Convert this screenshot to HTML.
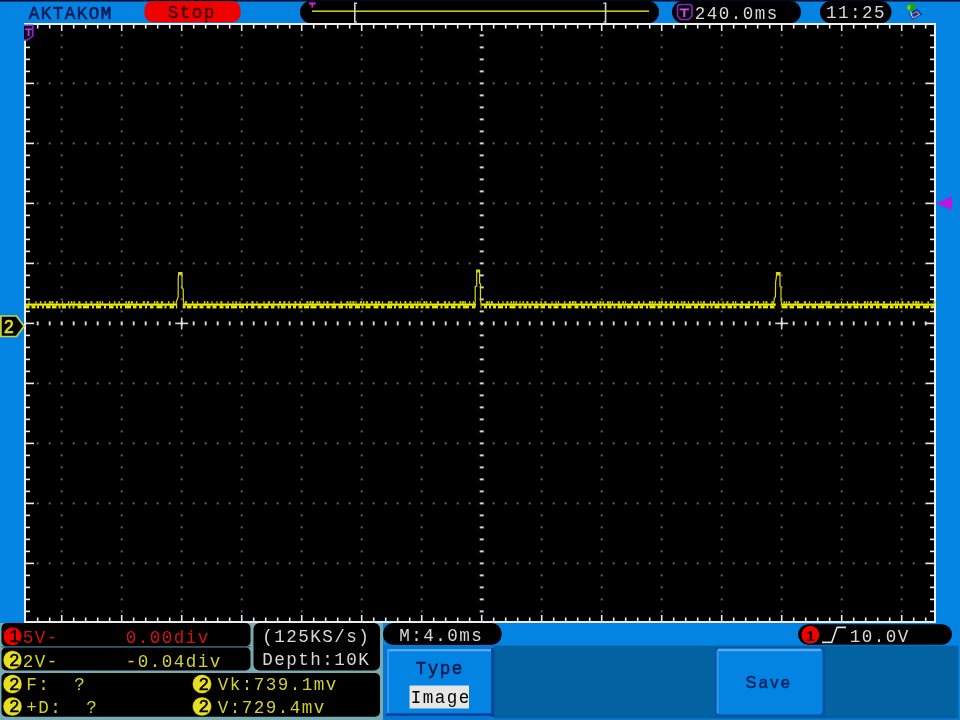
<!DOCTYPE html>
<html><head><meta charset="utf-8">
<style>
html,body{margin:0;padding:0;width:960px;height:720px;overflow:hidden;background:#0383e2}
svg{position:absolute;left:0;top:0;filter:blur(0.4px)}
text{font-family:"Liberation Mono",monospace;font-size:20px;white-space:pre}
.sans{font-family:"Liberation Sans",sans-serif}
</style></head><body>
<svg width="960" height="720" viewBox="0 0 960 720" xml:space="preserve">
<!-- background -->
<rect x="0" y="0" width="960" height="720" fill="#0383e2"/>
<rect x="0" y="0" width="960" height="1.5" fill="#000a28"/>
<!-- top bar -->
<text x="28" y="18.8" fill="#081a56" stroke="#081a56" stroke-width="0.7" letter-spacing="1.636" transform="matrix(0.88 0 0 0.91 4.080 1.692)">AKTAKOM</text>
<rect x="144.5" y="1.2" width="96" height="21" rx="8" fill="#f00000"/>
<text x="167" y="18.2" fill="#3a0000" stroke="#3a0000" stroke-width="0.5" letter-spacing="1.636" transform="matrix(0.88 0 0 0.91 20.760 1.638)">Stop</text>
<rect x="300" y="1" width="359" height="22.2" rx="11" fill="#000"/>
<rect x="312" y="10.4" width="337" height="1.6" fill="#c8c820"/>
<path d="M309 2.6h6.6v1.8h-2.4v3h-1.8v-3h-2.4z" fill="#e020e0"/>
<path d="M357 3.2 h-2.2 v18.8 h2" fill="none" stroke="#d0d0d0" stroke-width="1.6"/>
<path d="M603.4 3.2 h2.2 v18.8 h-2" fill="none" stroke="#d0d0d0" stroke-width="1.6"/>
<rect x="672" y="1" width="129" height="22.2" rx="11" fill="#000"/>
<path d="M677.5 7 q0-2.5 2.5-2.5 h9.5 q2.5 0 2.5 2.5 v9 l-3.5 3.5 h-8 l-3 -3.5z" fill="none" stroke="#8a22c8" stroke-width="1.6"/>
<path d="M679.6 8.4h9.4v1.9h-3.7v6.6h-2v-6.6h-3.7z" fill="#d84ef0"/>
<text x="694" y="19" fill="#d8d8d8" letter-spacing="1.636" transform="matrix(0.88 0 0 0.91 84.000 1.710)">240.0ms</text>
<rect x="820" y="1" width="71.5" height="22.2" rx="11" fill="#000"/>
<text x="825.3" y="18.1" fill="#d8d8d8" letter-spacing="1.636" transform="matrix(0.88 0 0 0.91 99.756 1.629)">11:25</text>
<!-- usb icon -->
<path d="M908.6 13.2 L917.2 8.6 L922.2 14.6 L912.2 19.8z" fill="#0c3c98"/>
<path d="M910.4 14.6 L917 11 L920.4 14.7 L912.6 18.4z" fill="#c8a0b8"/>
<path d="M911.8 14.4 L916.6 12 L918.6 14.4 L913.2 17z" fill="#203480"/>
<path d="M910.4 10.5 L911.6 15.5" stroke="#a8d8e8" stroke-width="1.3"/>
<path d="M906.2 7 Q906.6 3.4 911.5 3.5 Q916.4 3.7 916 6.8 Q914.6 9.8 910.6 11.8 Q906.2 10.4 906.2 7z" fill="#22a012"/>
<path d="M906.9 7.6 Q907.6 4.6 910.4 5 Q910.9 8.6 909.6 10.6 Q907.2 9.8 906.9 7.6z" fill="#68d058"/>
<!-- grid -->
<rect x="24" y="23" width="912" height="600" fill="#ededed"/>
<rect x="26" y="25" width="908" height="596" fill="#000"/>
<g fill="#626262"><rect x="60.7" y="34.4" width="2" height="2"/><rect x="60.7" y="46.4" width="2" height="2"/><rect x="60.7" y="58.4" width="2" height="2"/><rect x="60.7" y="70.4" width="2" height="2"/><rect x="60.7" y="82.4" width="2" height="2"/><rect x="60.7" y="94.4" width="2" height="2"/><rect x="60.7" y="106.4" width="2" height="2"/><rect x="60.7" y="118.4" width="2" height="2"/><rect x="60.7" y="130.4" width="2" height="2"/><rect x="60.7" y="142.4" width="2" height="2"/><rect x="60.7" y="154.4" width="2" height="2"/><rect x="60.7" y="166.4" width="2" height="2"/><rect x="60.7" y="178.4" width="2" height="2"/><rect x="60.7" y="190.4" width="2" height="2"/><rect x="60.7" y="202.4" width="2" height="2"/><rect x="60.7" y="214.4" width="2" height="2"/><rect x="60.7" y="226.4" width="2" height="2"/><rect x="60.7" y="238.4" width="2" height="2"/><rect x="60.7" y="250.4" width="2" height="2"/><rect x="60.7" y="262.4" width="2" height="2"/><rect x="60.7" y="274.4" width="2" height="2"/><rect x="60.7" y="286.4" width="2" height="2"/><rect x="60.7" y="298.4" width="2" height="2"/><rect x="60.7" y="310.4" width="2" height="2"/><rect x="60.7" y="322.4" width="2" height="2"/><rect x="60.7" y="334.4" width="2" height="2"/><rect x="60.7" y="346.4" width="2" height="2"/><rect x="60.7" y="358.4" width="2" height="2"/><rect x="60.7" y="370.4" width="2" height="2"/><rect x="60.7" y="382.4" width="2" height="2"/><rect x="60.7" y="394.4" width="2" height="2"/><rect x="60.7" y="406.4" width="2" height="2"/><rect x="60.7" y="418.4" width="2" height="2"/><rect x="60.7" y="430.4" width="2" height="2"/><rect x="60.7" y="442.4" width="2" height="2"/><rect x="60.7" y="454.4" width="2" height="2"/><rect x="60.7" y="466.4" width="2" height="2"/><rect x="60.7" y="478.4" width="2" height="2"/><rect x="60.7" y="490.4" width="2" height="2"/><rect x="60.7" y="502.4" width="2" height="2"/><rect x="60.7" y="514.4" width="2" height="2"/><rect x="60.7" y="526.4" width="2" height="2"/><rect x="60.7" y="538.4" width="2" height="2"/><rect x="60.7" y="550.4" width="2" height="2"/><rect x="60.7" y="562.4" width="2" height="2"/><rect x="60.7" y="574.4" width="2" height="2"/><rect x="60.7" y="586.4" width="2" height="2"/><rect x="60.7" y="598.4" width="2" height="2"/><rect x="60.7" y="610.4" width="2" height="2"/><rect x="120.7" y="34.4" width="2" height="2"/><rect x="120.7" y="46.4" width="2" height="2"/><rect x="120.7" y="58.4" width="2" height="2"/><rect x="120.7" y="70.4" width="2" height="2"/><rect x="120.7" y="82.4" width="2" height="2"/><rect x="120.7" y="94.4" width="2" height="2"/><rect x="120.7" y="106.4" width="2" height="2"/><rect x="120.7" y="118.4" width="2" height="2"/><rect x="120.7" y="130.4" width="2" height="2"/><rect x="120.7" y="142.4" width="2" height="2"/><rect x="120.7" y="154.4" width="2" height="2"/><rect x="120.7" y="166.4" width="2" height="2"/><rect x="120.7" y="178.4" width="2" height="2"/><rect x="120.7" y="190.4" width="2" height="2"/><rect x="120.7" y="202.4" width="2" height="2"/><rect x="120.7" y="214.4" width="2" height="2"/><rect x="120.7" y="226.4" width="2" height="2"/><rect x="120.7" y="238.4" width="2" height="2"/><rect x="120.7" y="250.4" width="2" height="2"/><rect x="120.7" y="262.4" width="2" height="2"/><rect x="120.7" y="274.4" width="2" height="2"/><rect x="120.7" y="286.4" width="2" height="2"/><rect x="120.7" y="298.4" width="2" height="2"/><rect x="120.7" y="310.4" width="2" height="2"/><rect x="120.7" y="322.4" width="2" height="2"/><rect x="120.7" y="334.4" width="2" height="2"/><rect x="120.7" y="346.4" width="2" height="2"/><rect x="120.7" y="358.4" width="2" height="2"/><rect x="120.7" y="370.4" width="2" height="2"/><rect x="120.7" y="382.4" width="2" height="2"/><rect x="120.7" y="394.4" width="2" height="2"/><rect x="120.7" y="406.4" width="2" height="2"/><rect x="120.7" y="418.4" width="2" height="2"/><rect x="120.7" y="430.4" width="2" height="2"/><rect x="120.7" y="442.4" width="2" height="2"/><rect x="120.7" y="454.4" width="2" height="2"/><rect x="120.7" y="466.4" width="2" height="2"/><rect x="120.7" y="478.4" width="2" height="2"/><rect x="120.7" y="490.4" width="2" height="2"/><rect x="120.7" y="502.4" width="2" height="2"/><rect x="120.7" y="514.4" width="2" height="2"/><rect x="120.7" y="526.4" width="2" height="2"/><rect x="120.7" y="538.4" width="2" height="2"/><rect x="120.7" y="550.4" width="2" height="2"/><rect x="120.7" y="562.4" width="2" height="2"/><rect x="120.7" y="574.4" width="2" height="2"/><rect x="120.7" y="586.4" width="2" height="2"/><rect x="120.7" y="598.4" width="2" height="2"/><rect x="120.7" y="610.4" width="2" height="2"/><rect x="180.7" y="34.4" width="2" height="2"/><rect x="180.7" y="46.4" width="2" height="2"/><rect x="180.7" y="58.4" width="2" height="2"/><rect x="180.7" y="70.4" width="2" height="2"/><rect x="180.7" y="82.4" width="2" height="2"/><rect x="180.7" y="94.4" width="2" height="2"/><rect x="180.7" y="106.4" width="2" height="2"/><rect x="180.7" y="118.4" width="2" height="2"/><rect x="180.7" y="130.4" width="2" height="2"/><rect x="180.7" y="142.4" width="2" height="2"/><rect x="180.7" y="154.4" width="2" height="2"/><rect x="180.7" y="166.4" width="2" height="2"/><rect x="180.7" y="178.4" width="2" height="2"/><rect x="180.7" y="190.4" width="2" height="2"/><rect x="180.7" y="202.4" width="2" height="2"/><rect x="180.7" y="214.4" width="2" height="2"/><rect x="180.7" y="226.4" width="2" height="2"/><rect x="180.7" y="238.4" width="2" height="2"/><rect x="180.7" y="250.4" width="2" height="2"/><rect x="180.7" y="262.4" width="2" height="2"/><rect x="180.7" y="274.4" width="2" height="2"/><rect x="180.7" y="286.4" width="2" height="2"/><rect x="180.7" y="298.4" width="2" height="2"/><rect x="180.7" y="310.4" width="2" height="2"/><rect x="180.7" y="322.4" width="2" height="2"/><rect x="180.7" y="334.4" width="2" height="2"/><rect x="180.7" y="346.4" width="2" height="2"/><rect x="180.7" y="358.4" width="2" height="2"/><rect x="180.7" y="370.4" width="2" height="2"/><rect x="180.7" y="382.4" width="2" height="2"/><rect x="180.7" y="394.4" width="2" height="2"/><rect x="180.7" y="406.4" width="2" height="2"/><rect x="180.7" y="418.4" width="2" height="2"/><rect x="180.7" y="430.4" width="2" height="2"/><rect x="180.7" y="442.4" width="2" height="2"/><rect x="180.7" y="454.4" width="2" height="2"/><rect x="180.7" y="466.4" width="2" height="2"/><rect x="180.7" y="478.4" width="2" height="2"/><rect x="180.7" y="490.4" width="2" height="2"/><rect x="180.7" y="502.4" width="2" height="2"/><rect x="180.7" y="514.4" width="2" height="2"/><rect x="180.7" y="526.4" width="2" height="2"/><rect x="180.7" y="538.4" width="2" height="2"/><rect x="180.7" y="550.4" width="2" height="2"/><rect x="180.7" y="562.4" width="2" height="2"/><rect x="180.7" y="574.4" width="2" height="2"/><rect x="180.7" y="586.4" width="2" height="2"/><rect x="180.7" y="598.4" width="2" height="2"/><rect x="180.7" y="610.4" width="2" height="2"/><rect x="240.7" y="34.4" width="2" height="2"/><rect x="240.7" y="46.4" width="2" height="2"/><rect x="240.7" y="58.4" width="2" height="2"/><rect x="240.7" y="70.4" width="2" height="2"/><rect x="240.7" y="82.4" width="2" height="2"/><rect x="240.7" y="94.4" width="2" height="2"/><rect x="240.7" y="106.4" width="2" height="2"/><rect x="240.7" y="118.4" width="2" height="2"/><rect x="240.7" y="130.4" width="2" height="2"/><rect x="240.7" y="142.4" width="2" height="2"/><rect x="240.7" y="154.4" width="2" height="2"/><rect x="240.7" y="166.4" width="2" height="2"/><rect x="240.7" y="178.4" width="2" height="2"/><rect x="240.7" y="190.4" width="2" height="2"/><rect x="240.7" y="202.4" width="2" height="2"/><rect x="240.7" y="214.4" width="2" height="2"/><rect x="240.7" y="226.4" width="2" height="2"/><rect x="240.7" y="238.4" width="2" height="2"/><rect x="240.7" y="250.4" width="2" height="2"/><rect x="240.7" y="262.4" width="2" height="2"/><rect x="240.7" y="274.4" width="2" height="2"/><rect x="240.7" y="286.4" width="2" height="2"/><rect x="240.7" y="298.4" width="2" height="2"/><rect x="240.7" y="310.4" width="2" height="2"/><rect x="240.7" y="322.4" width="2" height="2"/><rect x="240.7" y="334.4" width="2" height="2"/><rect x="240.7" y="346.4" width="2" height="2"/><rect x="240.7" y="358.4" width="2" height="2"/><rect x="240.7" y="370.4" width="2" height="2"/><rect x="240.7" y="382.4" width="2" height="2"/><rect x="240.7" y="394.4" width="2" height="2"/><rect x="240.7" y="406.4" width="2" height="2"/><rect x="240.7" y="418.4" width="2" height="2"/><rect x="240.7" y="430.4" width="2" height="2"/><rect x="240.7" y="442.4" width="2" height="2"/><rect x="240.7" y="454.4" width="2" height="2"/><rect x="240.7" y="466.4" width="2" height="2"/><rect x="240.7" y="478.4" width="2" height="2"/><rect x="240.7" y="490.4" width="2" height="2"/><rect x="240.7" y="502.4" width="2" height="2"/><rect x="240.7" y="514.4" width="2" height="2"/><rect x="240.7" y="526.4" width="2" height="2"/><rect x="240.7" y="538.4" width="2" height="2"/><rect x="240.7" y="550.4" width="2" height="2"/><rect x="240.7" y="562.4" width="2" height="2"/><rect x="240.7" y="574.4" width="2" height="2"/><rect x="240.7" y="586.4" width="2" height="2"/><rect x="240.7" y="598.4" width="2" height="2"/><rect x="240.7" y="610.4" width="2" height="2"/><rect x="300.7" y="34.4" width="2" height="2"/><rect x="300.7" y="46.4" width="2" height="2"/><rect x="300.7" y="58.4" width="2" height="2"/><rect x="300.7" y="70.4" width="2" height="2"/><rect x="300.7" y="82.4" width="2" height="2"/><rect x="300.7" y="94.4" width="2" height="2"/><rect x="300.7" y="106.4" width="2" height="2"/><rect x="300.7" y="118.4" width="2" height="2"/><rect x="300.7" y="130.4" width="2" height="2"/><rect x="300.7" y="142.4" width="2" height="2"/><rect x="300.7" y="154.4" width="2" height="2"/><rect x="300.7" y="166.4" width="2" height="2"/><rect x="300.7" y="178.4" width="2" height="2"/><rect x="300.7" y="190.4" width="2" height="2"/><rect x="300.7" y="202.4" width="2" height="2"/><rect x="300.7" y="214.4" width="2" height="2"/><rect x="300.7" y="226.4" width="2" height="2"/><rect x="300.7" y="238.4" width="2" height="2"/><rect x="300.7" y="250.4" width="2" height="2"/><rect x="300.7" y="262.4" width="2" height="2"/><rect x="300.7" y="274.4" width="2" height="2"/><rect x="300.7" y="286.4" width="2" height="2"/><rect x="300.7" y="298.4" width="2" height="2"/><rect x="300.7" y="310.4" width="2" height="2"/><rect x="300.7" y="322.4" width="2" height="2"/><rect x="300.7" y="334.4" width="2" height="2"/><rect x="300.7" y="346.4" width="2" height="2"/><rect x="300.7" y="358.4" width="2" height="2"/><rect x="300.7" y="370.4" width="2" height="2"/><rect x="300.7" y="382.4" width="2" height="2"/><rect x="300.7" y="394.4" width="2" height="2"/><rect x="300.7" y="406.4" width="2" height="2"/><rect x="300.7" y="418.4" width="2" height="2"/><rect x="300.7" y="430.4" width="2" height="2"/><rect x="300.7" y="442.4" width="2" height="2"/><rect x="300.7" y="454.4" width="2" height="2"/><rect x="300.7" y="466.4" width="2" height="2"/><rect x="300.7" y="478.4" width="2" height="2"/><rect x="300.7" y="490.4" width="2" height="2"/><rect x="300.7" y="502.4" width="2" height="2"/><rect x="300.7" y="514.4" width="2" height="2"/><rect x="300.7" y="526.4" width="2" height="2"/><rect x="300.7" y="538.4" width="2" height="2"/><rect x="300.7" y="550.4" width="2" height="2"/><rect x="300.7" y="562.4" width="2" height="2"/><rect x="300.7" y="574.4" width="2" height="2"/><rect x="300.7" y="586.4" width="2" height="2"/><rect x="300.7" y="598.4" width="2" height="2"/><rect x="300.7" y="610.4" width="2" height="2"/><rect x="360.7" y="34.4" width="2" height="2"/><rect x="360.7" y="46.4" width="2" height="2"/><rect x="360.7" y="58.4" width="2" height="2"/><rect x="360.7" y="70.4" width="2" height="2"/><rect x="360.7" y="82.4" width="2" height="2"/><rect x="360.7" y="94.4" width="2" height="2"/><rect x="360.7" y="106.4" width="2" height="2"/><rect x="360.7" y="118.4" width="2" height="2"/><rect x="360.7" y="130.4" width="2" height="2"/><rect x="360.7" y="142.4" width="2" height="2"/><rect x="360.7" y="154.4" width="2" height="2"/><rect x="360.7" y="166.4" width="2" height="2"/><rect x="360.7" y="178.4" width="2" height="2"/><rect x="360.7" y="190.4" width="2" height="2"/><rect x="360.7" y="202.4" width="2" height="2"/><rect x="360.7" y="214.4" width="2" height="2"/><rect x="360.7" y="226.4" width="2" height="2"/><rect x="360.7" y="238.4" width="2" height="2"/><rect x="360.7" y="250.4" width="2" height="2"/><rect x="360.7" y="262.4" width="2" height="2"/><rect x="360.7" y="274.4" width="2" height="2"/><rect x="360.7" y="286.4" width="2" height="2"/><rect x="360.7" y="298.4" width="2" height="2"/><rect x="360.7" y="310.4" width="2" height="2"/><rect x="360.7" y="322.4" width="2" height="2"/><rect x="360.7" y="334.4" width="2" height="2"/><rect x="360.7" y="346.4" width="2" height="2"/><rect x="360.7" y="358.4" width="2" height="2"/><rect x="360.7" y="370.4" width="2" height="2"/><rect x="360.7" y="382.4" width="2" height="2"/><rect x="360.7" y="394.4" width="2" height="2"/><rect x="360.7" y="406.4" width="2" height="2"/><rect x="360.7" y="418.4" width="2" height="2"/><rect x="360.7" y="430.4" width="2" height="2"/><rect x="360.7" y="442.4" width="2" height="2"/><rect x="360.7" y="454.4" width="2" height="2"/><rect x="360.7" y="466.4" width="2" height="2"/><rect x="360.7" y="478.4" width="2" height="2"/><rect x="360.7" y="490.4" width="2" height="2"/><rect x="360.7" y="502.4" width="2" height="2"/><rect x="360.7" y="514.4" width="2" height="2"/><rect x="360.7" y="526.4" width="2" height="2"/><rect x="360.7" y="538.4" width="2" height="2"/><rect x="360.7" y="550.4" width="2" height="2"/><rect x="360.7" y="562.4" width="2" height="2"/><rect x="360.7" y="574.4" width="2" height="2"/><rect x="360.7" y="586.4" width="2" height="2"/><rect x="360.7" y="598.4" width="2" height="2"/><rect x="360.7" y="610.4" width="2" height="2"/><rect x="420.7" y="34.4" width="2" height="2"/><rect x="420.7" y="46.4" width="2" height="2"/><rect x="420.7" y="58.4" width="2" height="2"/><rect x="420.7" y="70.4" width="2" height="2"/><rect x="420.7" y="82.4" width="2" height="2"/><rect x="420.7" y="94.4" width="2" height="2"/><rect x="420.7" y="106.4" width="2" height="2"/><rect x="420.7" y="118.4" width="2" height="2"/><rect x="420.7" y="130.4" width="2" height="2"/><rect x="420.7" y="142.4" width="2" height="2"/><rect x="420.7" y="154.4" width="2" height="2"/><rect x="420.7" y="166.4" width="2" height="2"/><rect x="420.7" y="178.4" width="2" height="2"/><rect x="420.7" y="190.4" width="2" height="2"/><rect x="420.7" y="202.4" width="2" height="2"/><rect x="420.7" y="214.4" width="2" height="2"/><rect x="420.7" y="226.4" width="2" height="2"/><rect x="420.7" y="238.4" width="2" height="2"/><rect x="420.7" y="250.4" width="2" height="2"/><rect x="420.7" y="262.4" width="2" height="2"/><rect x="420.7" y="274.4" width="2" height="2"/><rect x="420.7" y="286.4" width="2" height="2"/><rect x="420.7" y="298.4" width="2" height="2"/><rect x="420.7" y="310.4" width="2" height="2"/><rect x="420.7" y="322.4" width="2" height="2"/><rect x="420.7" y="334.4" width="2" height="2"/><rect x="420.7" y="346.4" width="2" height="2"/><rect x="420.7" y="358.4" width="2" height="2"/><rect x="420.7" y="370.4" width="2" height="2"/><rect x="420.7" y="382.4" width="2" height="2"/><rect x="420.7" y="394.4" width="2" height="2"/><rect x="420.7" y="406.4" width="2" height="2"/><rect x="420.7" y="418.4" width="2" height="2"/><rect x="420.7" y="430.4" width="2" height="2"/><rect x="420.7" y="442.4" width="2" height="2"/><rect x="420.7" y="454.4" width="2" height="2"/><rect x="420.7" y="466.4" width="2" height="2"/><rect x="420.7" y="478.4" width="2" height="2"/><rect x="420.7" y="490.4" width="2" height="2"/><rect x="420.7" y="502.4" width="2" height="2"/><rect x="420.7" y="514.4" width="2" height="2"/><rect x="420.7" y="526.4" width="2" height="2"/><rect x="420.7" y="538.4" width="2" height="2"/><rect x="420.7" y="550.4" width="2" height="2"/><rect x="420.7" y="562.4" width="2" height="2"/><rect x="420.7" y="574.4" width="2" height="2"/><rect x="420.7" y="586.4" width="2" height="2"/><rect x="420.7" y="598.4" width="2" height="2"/><rect x="420.7" y="610.4" width="2" height="2"/><rect x="540.7" y="34.4" width="2" height="2"/><rect x="540.7" y="46.4" width="2" height="2"/><rect x="540.7" y="58.4" width="2" height="2"/><rect x="540.7" y="70.4" width="2" height="2"/><rect x="540.7" y="82.4" width="2" height="2"/><rect x="540.7" y="94.4" width="2" height="2"/><rect x="540.7" y="106.4" width="2" height="2"/><rect x="540.7" y="118.4" width="2" height="2"/><rect x="540.7" y="130.4" width="2" height="2"/><rect x="540.7" y="142.4" width="2" height="2"/><rect x="540.7" y="154.4" width="2" height="2"/><rect x="540.7" y="166.4" width="2" height="2"/><rect x="540.7" y="178.4" width="2" height="2"/><rect x="540.7" y="190.4" width="2" height="2"/><rect x="540.7" y="202.4" width="2" height="2"/><rect x="540.7" y="214.4" width="2" height="2"/><rect x="540.7" y="226.4" width="2" height="2"/><rect x="540.7" y="238.4" width="2" height="2"/><rect x="540.7" y="250.4" width="2" height="2"/><rect x="540.7" y="262.4" width="2" height="2"/><rect x="540.7" y="274.4" width="2" height="2"/><rect x="540.7" y="286.4" width="2" height="2"/><rect x="540.7" y="298.4" width="2" height="2"/><rect x="540.7" y="310.4" width="2" height="2"/><rect x="540.7" y="322.4" width="2" height="2"/><rect x="540.7" y="334.4" width="2" height="2"/><rect x="540.7" y="346.4" width="2" height="2"/><rect x="540.7" y="358.4" width="2" height="2"/><rect x="540.7" y="370.4" width="2" height="2"/><rect x="540.7" y="382.4" width="2" height="2"/><rect x="540.7" y="394.4" width="2" height="2"/><rect x="540.7" y="406.4" width="2" height="2"/><rect x="540.7" y="418.4" width="2" height="2"/><rect x="540.7" y="430.4" width="2" height="2"/><rect x="540.7" y="442.4" width="2" height="2"/><rect x="540.7" y="454.4" width="2" height="2"/><rect x="540.7" y="466.4" width="2" height="2"/><rect x="540.7" y="478.4" width="2" height="2"/><rect x="540.7" y="490.4" width="2" height="2"/><rect x="540.7" y="502.4" width="2" height="2"/><rect x="540.7" y="514.4" width="2" height="2"/><rect x="540.7" y="526.4" width="2" height="2"/><rect x="540.7" y="538.4" width="2" height="2"/><rect x="540.7" y="550.4" width="2" height="2"/><rect x="540.7" y="562.4" width="2" height="2"/><rect x="540.7" y="574.4" width="2" height="2"/><rect x="540.7" y="586.4" width="2" height="2"/><rect x="540.7" y="598.4" width="2" height="2"/><rect x="540.7" y="610.4" width="2" height="2"/><rect x="600.7" y="34.4" width="2" height="2"/><rect x="600.7" y="46.4" width="2" height="2"/><rect x="600.7" y="58.4" width="2" height="2"/><rect x="600.7" y="70.4" width="2" height="2"/><rect x="600.7" y="82.4" width="2" height="2"/><rect x="600.7" y="94.4" width="2" height="2"/><rect x="600.7" y="106.4" width="2" height="2"/><rect x="600.7" y="118.4" width="2" height="2"/><rect x="600.7" y="130.4" width="2" height="2"/><rect x="600.7" y="142.4" width="2" height="2"/><rect x="600.7" y="154.4" width="2" height="2"/><rect x="600.7" y="166.4" width="2" height="2"/><rect x="600.7" y="178.4" width="2" height="2"/><rect x="600.7" y="190.4" width="2" height="2"/><rect x="600.7" y="202.4" width="2" height="2"/><rect x="600.7" y="214.4" width="2" height="2"/><rect x="600.7" y="226.4" width="2" height="2"/><rect x="600.7" y="238.4" width="2" height="2"/><rect x="600.7" y="250.4" width="2" height="2"/><rect x="600.7" y="262.4" width="2" height="2"/><rect x="600.7" y="274.4" width="2" height="2"/><rect x="600.7" y="286.4" width="2" height="2"/><rect x="600.7" y="298.4" width="2" height="2"/><rect x="600.7" y="310.4" width="2" height="2"/><rect x="600.7" y="322.4" width="2" height="2"/><rect x="600.7" y="334.4" width="2" height="2"/><rect x="600.7" y="346.4" width="2" height="2"/><rect x="600.7" y="358.4" width="2" height="2"/><rect x="600.7" y="370.4" width="2" height="2"/><rect x="600.7" y="382.4" width="2" height="2"/><rect x="600.7" y="394.4" width="2" height="2"/><rect x="600.7" y="406.4" width="2" height="2"/><rect x="600.7" y="418.4" width="2" height="2"/><rect x="600.7" y="430.4" width="2" height="2"/><rect x="600.7" y="442.4" width="2" height="2"/><rect x="600.7" y="454.4" width="2" height="2"/><rect x="600.7" y="466.4" width="2" height="2"/><rect x="600.7" y="478.4" width="2" height="2"/><rect x="600.7" y="490.4" width="2" height="2"/><rect x="600.7" y="502.4" width="2" height="2"/><rect x="600.7" y="514.4" width="2" height="2"/><rect x="600.7" y="526.4" width="2" height="2"/><rect x="600.7" y="538.4" width="2" height="2"/><rect x="600.7" y="550.4" width="2" height="2"/><rect x="600.7" y="562.4" width="2" height="2"/><rect x="600.7" y="574.4" width="2" height="2"/><rect x="600.7" y="586.4" width="2" height="2"/><rect x="600.7" y="598.4" width="2" height="2"/><rect x="600.7" y="610.4" width="2" height="2"/><rect x="660.7" y="34.4" width="2" height="2"/><rect x="660.7" y="46.4" width="2" height="2"/><rect x="660.7" y="58.4" width="2" height="2"/><rect x="660.7" y="70.4" width="2" height="2"/><rect x="660.7" y="82.4" width="2" height="2"/><rect x="660.7" y="94.4" width="2" height="2"/><rect x="660.7" y="106.4" width="2" height="2"/><rect x="660.7" y="118.4" width="2" height="2"/><rect x="660.7" y="130.4" width="2" height="2"/><rect x="660.7" y="142.4" width="2" height="2"/><rect x="660.7" y="154.4" width="2" height="2"/><rect x="660.7" y="166.4" width="2" height="2"/><rect x="660.7" y="178.4" width="2" height="2"/><rect x="660.7" y="190.4" width="2" height="2"/><rect x="660.7" y="202.4" width="2" height="2"/><rect x="660.7" y="214.4" width="2" height="2"/><rect x="660.7" y="226.4" width="2" height="2"/><rect x="660.7" y="238.4" width="2" height="2"/><rect x="660.7" y="250.4" width="2" height="2"/><rect x="660.7" y="262.4" width="2" height="2"/><rect x="660.7" y="274.4" width="2" height="2"/><rect x="660.7" y="286.4" width="2" height="2"/><rect x="660.7" y="298.4" width="2" height="2"/><rect x="660.7" y="310.4" width="2" height="2"/><rect x="660.7" y="322.4" width="2" height="2"/><rect x="660.7" y="334.4" width="2" height="2"/><rect x="660.7" y="346.4" width="2" height="2"/><rect x="660.7" y="358.4" width="2" height="2"/><rect x="660.7" y="370.4" width="2" height="2"/><rect x="660.7" y="382.4" width="2" height="2"/><rect x="660.7" y="394.4" width="2" height="2"/><rect x="660.7" y="406.4" width="2" height="2"/><rect x="660.7" y="418.4" width="2" height="2"/><rect x="660.7" y="430.4" width="2" height="2"/><rect x="660.7" y="442.4" width="2" height="2"/><rect x="660.7" y="454.4" width="2" height="2"/><rect x="660.7" y="466.4" width="2" height="2"/><rect x="660.7" y="478.4" width="2" height="2"/><rect x="660.7" y="490.4" width="2" height="2"/><rect x="660.7" y="502.4" width="2" height="2"/><rect x="660.7" y="514.4" width="2" height="2"/><rect x="660.7" y="526.4" width="2" height="2"/><rect x="660.7" y="538.4" width="2" height="2"/><rect x="660.7" y="550.4" width="2" height="2"/><rect x="660.7" y="562.4" width="2" height="2"/><rect x="660.7" y="574.4" width="2" height="2"/><rect x="660.7" y="586.4" width="2" height="2"/><rect x="660.7" y="598.4" width="2" height="2"/><rect x="660.7" y="610.4" width="2" height="2"/><rect x="720.7" y="34.4" width="2" height="2"/><rect x="720.7" y="46.4" width="2" height="2"/><rect x="720.7" y="58.4" width="2" height="2"/><rect x="720.7" y="70.4" width="2" height="2"/><rect x="720.7" y="82.4" width="2" height="2"/><rect x="720.7" y="94.4" width="2" height="2"/><rect x="720.7" y="106.4" width="2" height="2"/><rect x="720.7" y="118.4" width="2" height="2"/><rect x="720.7" y="130.4" width="2" height="2"/><rect x="720.7" y="142.4" width="2" height="2"/><rect x="720.7" y="154.4" width="2" height="2"/><rect x="720.7" y="166.4" width="2" height="2"/><rect x="720.7" y="178.4" width="2" height="2"/><rect x="720.7" y="190.4" width="2" height="2"/><rect x="720.7" y="202.4" width="2" height="2"/><rect x="720.7" y="214.4" width="2" height="2"/><rect x="720.7" y="226.4" width="2" height="2"/><rect x="720.7" y="238.4" width="2" height="2"/><rect x="720.7" y="250.4" width="2" height="2"/><rect x="720.7" y="262.4" width="2" height="2"/><rect x="720.7" y="274.4" width="2" height="2"/><rect x="720.7" y="286.4" width="2" height="2"/><rect x="720.7" y="298.4" width="2" height="2"/><rect x="720.7" y="310.4" width="2" height="2"/><rect x="720.7" y="322.4" width="2" height="2"/><rect x="720.7" y="334.4" width="2" height="2"/><rect x="720.7" y="346.4" width="2" height="2"/><rect x="720.7" y="358.4" width="2" height="2"/><rect x="720.7" y="370.4" width="2" height="2"/><rect x="720.7" y="382.4" width="2" height="2"/><rect x="720.7" y="394.4" width="2" height="2"/><rect x="720.7" y="406.4" width="2" height="2"/><rect x="720.7" y="418.4" width="2" height="2"/><rect x="720.7" y="430.4" width="2" height="2"/><rect x="720.7" y="442.4" width="2" height="2"/><rect x="720.7" y="454.4" width="2" height="2"/><rect x="720.7" y="466.4" width="2" height="2"/><rect x="720.7" y="478.4" width="2" height="2"/><rect x="720.7" y="490.4" width="2" height="2"/><rect x="720.7" y="502.4" width="2" height="2"/><rect x="720.7" y="514.4" width="2" height="2"/><rect x="720.7" y="526.4" width="2" height="2"/><rect x="720.7" y="538.4" width="2" height="2"/><rect x="720.7" y="550.4" width="2" height="2"/><rect x="720.7" y="562.4" width="2" height="2"/><rect x="720.7" y="574.4" width="2" height="2"/><rect x="720.7" y="586.4" width="2" height="2"/><rect x="720.7" y="598.4" width="2" height="2"/><rect x="720.7" y="610.4" width="2" height="2"/><rect x="780.7" y="34.4" width="2" height="2"/><rect x="780.7" y="46.4" width="2" height="2"/><rect x="780.7" y="58.4" width="2" height="2"/><rect x="780.7" y="70.4" width="2" height="2"/><rect x="780.7" y="82.4" width="2" height="2"/><rect x="780.7" y="94.4" width="2" height="2"/><rect x="780.7" y="106.4" width="2" height="2"/><rect x="780.7" y="118.4" width="2" height="2"/><rect x="780.7" y="130.4" width="2" height="2"/><rect x="780.7" y="142.4" width="2" height="2"/><rect x="780.7" y="154.4" width="2" height="2"/><rect x="780.7" y="166.4" width="2" height="2"/><rect x="780.7" y="178.4" width="2" height="2"/><rect x="780.7" y="190.4" width="2" height="2"/><rect x="780.7" y="202.4" width="2" height="2"/><rect x="780.7" y="214.4" width="2" height="2"/><rect x="780.7" y="226.4" width="2" height="2"/><rect x="780.7" y="238.4" width="2" height="2"/><rect x="780.7" y="250.4" width="2" height="2"/><rect x="780.7" y="262.4" width="2" height="2"/><rect x="780.7" y="274.4" width="2" height="2"/><rect x="780.7" y="286.4" width="2" height="2"/><rect x="780.7" y="298.4" width="2" height="2"/><rect x="780.7" y="310.4" width="2" height="2"/><rect x="780.7" y="322.4" width="2" height="2"/><rect x="780.7" y="334.4" width="2" height="2"/><rect x="780.7" y="346.4" width="2" height="2"/><rect x="780.7" y="358.4" width="2" height="2"/><rect x="780.7" y="370.4" width="2" height="2"/><rect x="780.7" y="382.4" width="2" height="2"/><rect x="780.7" y="394.4" width="2" height="2"/><rect x="780.7" y="406.4" width="2" height="2"/><rect x="780.7" y="418.4" width="2" height="2"/><rect x="780.7" y="430.4" width="2" height="2"/><rect x="780.7" y="442.4" width="2" height="2"/><rect x="780.7" y="454.4" width="2" height="2"/><rect x="780.7" y="466.4" width="2" height="2"/><rect x="780.7" y="478.4" width="2" height="2"/><rect x="780.7" y="490.4" width="2" height="2"/><rect x="780.7" y="502.4" width="2" height="2"/><rect x="780.7" y="514.4" width="2" height="2"/><rect x="780.7" y="526.4" width="2" height="2"/><rect x="780.7" y="538.4" width="2" height="2"/><rect x="780.7" y="550.4" width="2" height="2"/><rect x="780.7" y="562.4" width="2" height="2"/><rect x="780.7" y="574.4" width="2" height="2"/><rect x="780.7" y="586.4" width="2" height="2"/><rect x="780.7" y="598.4" width="2" height="2"/><rect x="780.7" y="610.4" width="2" height="2"/><rect x="840.7" y="34.4" width="2" height="2"/><rect x="840.7" y="46.4" width="2" height="2"/><rect x="840.7" y="58.4" width="2" height="2"/><rect x="840.7" y="70.4" width="2" height="2"/><rect x="840.7" y="82.4" width="2" height="2"/><rect x="840.7" y="94.4" width="2" height="2"/><rect x="840.7" y="106.4" width="2" height="2"/><rect x="840.7" y="118.4" width="2" height="2"/><rect x="840.7" y="130.4" width="2" height="2"/><rect x="840.7" y="142.4" width="2" height="2"/><rect x="840.7" y="154.4" width="2" height="2"/><rect x="840.7" y="166.4" width="2" height="2"/><rect x="840.7" y="178.4" width="2" height="2"/><rect x="840.7" y="190.4" width="2" height="2"/><rect x="840.7" y="202.4" width="2" height="2"/><rect x="840.7" y="214.4" width="2" height="2"/><rect x="840.7" y="226.4" width="2" height="2"/><rect x="840.7" y="238.4" width="2" height="2"/><rect x="840.7" y="250.4" width="2" height="2"/><rect x="840.7" y="262.4" width="2" height="2"/><rect x="840.7" y="274.4" width="2" height="2"/><rect x="840.7" y="286.4" width="2" height="2"/><rect x="840.7" y="298.4" width="2" height="2"/><rect x="840.7" y="310.4" width="2" height="2"/><rect x="840.7" y="322.4" width="2" height="2"/><rect x="840.7" y="334.4" width="2" height="2"/><rect x="840.7" y="346.4" width="2" height="2"/><rect x="840.7" y="358.4" width="2" height="2"/><rect x="840.7" y="370.4" width="2" height="2"/><rect x="840.7" y="382.4" width="2" height="2"/><rect x="840.7" y="394.4" width="2" height="2"/><rect x="840.7" y="406.4" width="2" height="2"/><rect x="840.7" y="418.4" width="2" height="2"/><rect x="840.7" y="430.4" width="2" height="2"/><rect x="840.7" y="442.4" width="2" height="2"/><rect x="840.7" y="454.4" width="2" height="2"/><rect x="840.7" y="466.4" width="2" height="2"/><rect x="840.7" y="478.4" width="2" height="2"/><rect x="840.7" y="490.4" width="2" height="2"/><rect x="840.7" y="502.4" width="2" height="2"/><rect x="840.7" y="514.4" width="2" height="2"/><rect x="840.7" y="526.4" width="2" height="2"/><rect x="840.7" y="538.4" width="2" height="2"/><rect x="840.7" y="550.4" width="2" height="2"/><rect x="840.7" y="562.4" width="2" height="2"/><rect x="840.7" y="574.4" width="2" height="2"/><rect x="840.7" y="586.4" width="2" height="2"/><rect x="840.7" y="598.4" width="2" height="2"/><rect x="840.7" y="610.4" width="2" height="2"/><rect x="900.7" y="34.4" width="2" height="2"/><rect x="900.7" y="46.4" width="2" height="2"/><rect x="900.7" y="58.4" width="2" height="2"/><rect x="900.7" y="70.4" width="2" height="2"/><rect x="900.7" y="82.4" width="2" height="2"/><rect x="900.7" y="94.4" width="2" height="2"/><rect x="900.7" y="106.4" width="2" height="2"/><rect x="900.7" y="118.4" width="2" height="2"/><rect x="900.7" y="130.4" width="2" height="2"/><rect x="900.7" y="142.4" width="2" height="2"/><rect x="900.7" y="154.4" width="2" height="2"/><rect x="900.7" y="166.4" width="2" height="2"/><rect x="900.7" y="178.4" width="2" height="2"/><rect x="900.7" y="190.4" width="2" height="2"/><rect x="900.7" y="202.4" width="2" height="2"/><rect x="900.7" y="214.4" width="2" height="2"/><rect x="900.7" y="226.4" width="2" height="2"/><rect x="900.7" y="238.4" width="2" height="2"/><rect x="900.7" y="250.4" width="2" height="2"/><rect x="900.7" y="262.4" width="2" height="2"/><rect x="900.7" y="274.4" width="2" height="2"/><rect x="900.7" y="286.4" width="2" height="2"/><rect x="900.7" y="298.4" width="2" height="2"/><rect x="900.7" y="310.4" width="2" height="2"/><rect x="900.7" y="322.4" width="2" height="2"/><rect x="900.7" y="334.4" width="2" height="2"/><rect x="900.7" y="346.4" width="2" height="2"/><rect x="900.7" y="358.4" width="2" height="2"/><rect x="900.7" y="370.4" width="2" height="2"/><rect x="900.7" y="382.4" width="2" height="2"/><rect x="900.7" y="394.4" width="2" height="2"/><rect x="900.7" y="406.4" width="2" height="2"/><rect x="900.7" y="418.4" width="2" height="2"/><rect x="900.7" y="430.4" width="2" height="2"/><rect x="900.7" y="442.4" width="2" height="2"/><rect x="900.7" y="454.4" width="2" height="2"/><rect x="900.7" y="466.4" width="2" height="2"/><rect x="900.7" y="478.4" width="2" height="2"/><rect x="900.7" y="490.4" width="2" height="2"/><rect x="900.7" y="502.4" width="2" height="2"/><rect x="900.7" y="514.4" width="2" height="2"/><rect x="900.7" y="526.4" width="2" height="2"/><rect x="900.7" y="538.4" width="2" height="2"/><rect x="900.7" y="550.4" width="2" height="2"/><rect x="900.7" y="562.4" width="2" height="2"/><rect x="900.7" y="574.4" width="2" height="2"/><rect x="900.7" y="586.4" width="2" height="2"/><rect x="900.7" y="598.4" width="2" height="2"/><rect x="900.7" y="610.4" width="2" height="2"/><rect x="36.7" y="82.4" width="2" height="2"/><rect x="48.7" y="82.4" width="2" height="2"/><rect x="72.7" y="82.4" width="2" height="2"/><rect x="84.7" y="82.4" width="2" height="2"/><rect x="96.7" y="82.4" width="2" height="2"/><rect x="108.7" y="82.4" width="2" height="2"/><rect x="132.7" y="82.4" width="2" height="2"/><rect x="144.7" y="82.4" width="2" height="2"/><rect x="156.7" y="82.4" width="2" height="2"/><rect x="168.7" y="82.4" width="2" height="2"/><rect x="192.7" y="82.4" width="2" height="2"/><rect x="204.7" y="82.4" width="2" height="2"/><rect x="216.7" y="82.4" width="2" height="2"/><rect x="228.7" y="82.4" width="2" height="2"/><rect x="252.7" y="82.4" width="2" height="2"/><rect x="264.7" y="82.4" width="2" height="2"/><rect x="276.7" y="82.4" width="2" height="2"/><rect x="288.7" y="82.4" width="2" height="2"/><rect x="312.7" y="82.4" width="2" height="2"/><rect x="324.7" y="82.4" width="2" height="2"/><rect x="336.7" y="82.4" width="2" height="2"/><rect x="348.7" y="82.4" width="2" height="2"/><rect x="372.7" y="82.4" width="2" height="2"/><rect x="384.7" y="82.4" width="2" height="2"/><rect x="396.7" y="82.4" width="2" height="2"/><rect x="408.7" y="82.4" width="2" height="2"/><rect x="432.7" y="82.4" width="2" height="2"/><rect x="444.7" y="82.4" width="2" height="2"/><rect x="456.7" y="82.4" width="2" height="2"/><rect x="468.7" y="82.4" width="2" height="2"/><rect x="492.7" y="82.4" width="2" height="2"/><rect x="504.7" y="82.4" width="2" height="2"/><rect x="516.7" y="82.4" width="2" height="2"/><rect x="528.7" y="82.4" width="2" height="2"/><rect x="552.7" y="82.4" width="2" height="2"/><rect x="564.7" y="82.4" width="2" height="2"/><rect x="576.7" y="82.4" width="2" height="2"/><rect x="588.7" y="82.4" width="2" height="2"/><rect x="612.7" y="82.4" width="2" height="2"/><rect x="624.7" y="82.4" width="2" height="2"/><rect x="636.7" y="82.4" width="2" height="2"/><rect x="648.7" y="82.4" width="2" height="2"/><rect x="672.7" y="82.4" width="2" height="2"/><rect x="684.7" y="82.4" width="2" height="2"/><rect x="696.7" y="82.4" width="2" height="2"/><rect x="708.7" y="82.4" width="2" height="2"/><rect x="732.7" y="82.4" width="2" height="2"/><rect x="744.7" y="82.4" width="2" height="2"/><rect x="756.7" y="82.4" width="2" height="2"/><rect x="768.7" y="82.4" width="2" height="2"/><rect x="792.7" y="82.4" width="2" height="2"/><rect x="804.7" y="82.4" width="2" height="2"/><rect x="816.7" y="82.4" width="2" height="2"/><rect x="828.7" y="82.4" width="2" height="2"/><rect x="852.7" y="82.4" width="2" height="2"/><rect x="864.7" y="82.4" width="2" height="2"/><rect x="876.7" y="82.4" width="2" height="2"/><rect x="888.7" y="82.4" width="2" height="2"/><rect x="912.7" y="82.4" width="2" height="2"/><rect x="924.7" y="82.4" width="2" height="2"/><rect x="36.7" y="142.4" width="2" height="2"/><rect x="48.7" y="142.4" width="2" height="2"/><rect x="72.7" y="142.4" width="2" height="2"/><rect x="84.7" y="142.4" width="2" height="2"/><rect x="96.7" y="142.4" width="2" height="2"/><rect x="108.7" y="142.4" width="2" height="2"/><rect x="132.7" y="142.4" width="2" height="2"/><rect x="144.7" y="142.4" width="2" height="2"/><rect x="156.7" y="142.4" width="2" height="2"/><rect x="168.7" y="142.4" width="2" height="2"/><rect x="192.7" y="142.4" width="2" height="2"/><rect x="204.7" y="142.4" width="2" height="2"/><rect x="216.7" y="142.4" width="2" height="2"/><rect x="228.7" y="142.4" width="2" height="2"/><rect x="252.7" y="142.4" width="2" height="2"/><rect x="264.7" y="142.4" width="2" height="2"/><rect x="276.7" y="142.4" width="2" height="2"/><rect x="288.7" y="142.4" width="2" height="2"/><rect x="312.7" y="142.4" width="2" height="2"/><rect x="324.7" y="142.4" width="2" height="2"/><rect x="336.7" y="142.4" width="2" height="2"/><rect x="348.7" y="142.4" width="2" height="2"/><rect x="372.7" y="142.4" width="2" height="2"/><rect x="384.7" y="142.4" width="2" height="2"/><rect x="396.7" y="142.4" width="2" height="2"/><rect x="408.7" y="142.4" width="2" height="2"/><rect x="432.7" y="142.4" width="2" height="2"/><rect x="444.7" y="142.4" width="2" height="2"/><rect x="456.7" y="142.4" width="2" height="2"/><rect x="468.7" y="142.4" width="2" height="2"/><rect x="492.7" y="142.4" width="2" height="2"/><rect x="504.7" y="142.4" width="2" height="2"/><rect x="516.7" y="142.4" width="2" height="2"/><rect x="528.7" y="142.4" width="2" height="2"/><rect x="552.7" y="142.4" width="2" height="2"/><rect x="564.7" y="142.4" width="2" height="2"/><rect x="576.7" y="142.4" width="2" height="2"/><rect x="588.7" y="142.4" width="2" height="2"/><rect x="612.7" y="142.4" width="2" height="2"/><rect x="624.7" y="142.4" width="2" height="2"/><rect x="636.7" y="142.4" width="2" height="2"/><rect x="648.7" y="142.4" width="2" height="2"/><rect x="672.7" y="142.4" width="2" height="2"/><rect x="684.7" y="142.4" width="2" height="2"/><rect x="696.7" y="142.4" width="2" height="2"/><rect x="708.7" y="142.4" width="2" height="2"/><rect x="732.7" y="142.4" width="2" height="2"/><rect x="744.7" y="142.4" width="2" height="2"/><rect x="756.7" y="142.4" width="2" height="2"/><rect x="768.7" y="142.4" width="2" height="2"/><rect x="792.7" y="142.4" width="2" height="2"/><rect x="804.7" y="142.4" width="2" height="2"/><rect x="816.7" y="142.4" width="2" height="2"/><rect x="828.7" y="142.4" width="2" height="2"/><rect x="852.7" y="142.4" width="2" height="2"/><rect x="864.7" y="142.4" width="2" height="2"/><rect x="876.7" y="142.4" width="2" height="2"/><rect x="888.7" y="142.4" width="2" height="2"/><rect x="912.7" y="142.4" width="2" height="2"/><rect x="924.7" y="142.4" width="2" height="2"/><rect x="36.7" y="202.4" width="2" height="2"/><rect x="48.7" y="202.4" width="2" height="2"/><rect x="72.7" y="202.4" width="2" height="2"/><rect x="84.7" y="202.4" width="2" height="2"/><rect x="96.7" y="202.4" width="2" height="2"/><rect x="108.7" y="202.4" width="2" height="2"/><rect x="132.7" y="202.4" width="2" height="2"/><rect x="144.7" y="202.4" width="2" height="2"/><rect x="156.7" y="202.4" width="2" height="2"/><rect x="168.7" y="202.4" width="2" height="2"/><rect x="192.7" y="202.4" width="2" height="2"/><rect x="204.7" y="202.4" width="2" height="2"/><rect x="216.7" y="202.4" width="2" height="2"/><rect x="228.7" y="202.4" width="2" height="2"/><rect x="252.7" y="202.4" width="2" height="2"/><rect x="264.7" y="202.4" width="2" height="2"/><rect x="276.7" y="202.4" width="2" height="2"/><rect x="288.7" y="202.4" width="2" height="2"/><rect x="312.7" y="202.4" width="2" height="2"/><rect x="324.7" y="202.4" width="2" height="2"/><rect x="336.7" y="202.4" width="2" height="2"/><rect x="348.7" y="202.4" width="2" height="2"/><rect x="372.7" y="202.4" width="2" height="2"/><rect x="384.7" y="202.4" width="2" height="2"/><rect x="396.7" y="202.4" width="2" height="2"/><rect x="408.7" y="202.4" width="2" height="2"/><rect x="432.7" y="202.4" width="2" height="2"/><rect x="444.7" y="202.4" width="2" height="2"/><rect x="456.7" y="202.4" width="2" height="2"/><rect x="468.7" y="202.4" width="2" height="2"/><rect x="492.7" y="202.4" width="2" height="2"/><rect x="504.7" y="202.4" width="2" height="2"/><rect x="516.7" y="202.4" width="2" height="2"/><rect x="528.7" y="202.4" width="2" height="2"/><rect x="552.7" y="202.4" width="2" height="2"/><rect x="564.7" y="202.4" width="2" height="2"/><rect x="576.7" y="202.4" width="2" height="2"/><rect x="588.7" y="202.4" width="2" height="2"/><rect x="612.7" y="202.4" width="2" height="2"/><rect x="624.7" y="202.4" width="2" height="2"/><rect x="636.7" y="202.4" width="2" height="2"/><rect x="648.7" y="202.4" width="2" height="2"/><rect x="672.7" y="202.4" width="2" height="2"/><rect x="684.7" y="202.4" width="2" height="2"/><rect x="696.7" y="202.4" width="2" height="2"/><rect x="708.7" y="202.4" width="2" height="2"/><rect x="732.7" y="202.4" width="2" height="2"/><rect x="744.7" y="202.4" width="2" height="2"/><rect x="756.7" y="202.4" width="2" height="2"/><rect x="768.7" y="202.4" width="2" height="2"/><rect x="792.7" y="202.4" width="2" height="2"/><rect x="804.7" y="202.4" width="2" height="2"/><rect x="816.7" y="202.4" width="2" height="2"/><rect x="828.7" y="202.4" width="2" height="2"/><rect x="852.7" y="202.4" width="2" height="2"/><rect x="864.7" y="202.4" width="2" height="2"/><rect x="876.7" y="202.4" width="2" height="2"/><rect x="888.7" y="202.4" width="2" height="2"/><rect x="912.7" y="202.4" width="2" height="2"/><rect x="924.7" y="202.4" width="2" height="2"/><rect x="36.7" y="262.4" width="2" height="2"/><rect x="48.7" y="262.4" width="2" height="2"/><rect x="72.7" y="262.4" width="2" height="2"/><rect x="84.7" y="262.4" width="2" height="2"/><rect x="96.7" y="262.4" width="2" height="2"/><rect x="108.7" y="262.4" width="2" height="2"/><rect x="132.7" y="262.4" width="2" height="2"/><rect x="144.7" y="262.4" width="2" height="2"/><rect x="156.7" y="262.4" width="2" height="2"/><rect x="168.7" y="262.4" width="2" height="2"/><rect x="192.7" y="262.4" width="2" height="2"/><rect x="204.7" y="262.4" width="2" height="2"/><rect x="216.7" y="262.4" width="2" height="2"/><rect x="228.7" y="262.4" width="2" height="2"/><rect x="252.7" y="262.4" width="2" height="2"/><rect x="264.7" y="262.4" width="2" height="2"/><rect x="276.7" y="262.4" width="2" height="2"/><rect x="288.7" y="262.4" width="2" height="2"/><rect x="312.7" y="262.4" width="2" height="2"/><rect x="324.7" y="262.4" width="2" height="2"/><rect x="336.7" y="262.4" width="2" height="2"/><rect x="348.7" y="262.4" width="2" height="2"/><rect x="372.7" y="262.4" width="2" height="2"/><rect x="384.7" y="262.4" width="2" height="2"/><rect x="396.7" y="262.4" width="2" height="2"/><rect x="408.7" y="262.4" width="2" height="2"/><rect x="432.7" y="262.4" width="2" height="2"/><rect x="444.7" y="262.4" width="2" height="2"/><rect x="456.7" y="262.4" width="2" height="2"/><rect x="468.7" y="262.4" width="2" height="2"/><rect x="492.7" y="262.4" width="2" height="2"/><rect x="504.7" y="262.4" width="2" height="2"/><rect x="516.7" y="262.4" width="2" height="2"/><rect x="528.7" y="262.4" width="2" height="2"/><rect x="552.7" y="262.4" width="2" height="2"/><rect x="564.7" y="262.4" width="2" height="2"/><rect x="576.7" y="262.4" width="2" height="2"/><rect x="588.7" y="262.4" width="2" height="2"/><rect x="612.7" y="262.4" width="2" height="2"/><rect x="624.7" y="262.4" width="2" height="2"/><rect x="636.7" y="262.4" width="2" height="2"/><rect x="648.7" y="262.4" width="2" height="2"/><rect x="672.7" y="262.4" width="2" height="2"/><rect x="684.7" y="262.4" width="2" height="2"/><rect x="696.7" y="262.4" width="2" height="2"/><rect x="708.7" y="262.4" width="2" height="2"/><rect x="732.7" y="262.4" width="2" height="2"/><rect x="744.7" y="262.4" width="2" height="2"/><rect x="756.7" y="262.4" width="2" height="2"/><rect x="768.7" y="262.4" width="2" height="2"/><rect x="792.7" y="262.4" width="2" height="2"/><rect x="804.7" y="262.4" width="2" height="2"/><rect x="816.7" y="262.4" width="2" height="2"/><rect x="828.7" y="262.4" width="2" height="2"/><rect x="852.7" y="262.4" width="2" height="2"/><rect x="864.7" y="262.4" width="2" height="2"/><rect x="876.7" y="262.4" width="2" height="2"/><rect x="888.7" y="262.4" width="2" height="2"/><rect x="912.7" y="262.4" width="2" height="2"/><rect x="924.7" y="262.4" width="2" height="2"/><rect x="36.7" y="382.4" width="2" height="2"/><rect x="48.7" y="382.4" width="2" height="2"/><rect x="72.7" y="382.4" width="2" height="2"/><rect x="84.7" y="382.4" width="2" height="2"/><rect x="96.7" y="382.4" width="2" height="2"/><rect x="108.7" y="382.4" width="2" height="2"/><rect x="132.7" y="382.4" width="2" height="2"/><rect x="144.7" y="382.4" width="2" height="2"/><rect x="156.7" y="382.4" width="2" height="2"/><rect x="168.7" y="382.4" width="2" height="2"/><rect x="192.7" y="382.4" width="2" height="2"/><rect x="204.7" y="382.4" width="2" height="2"/><rect x="216.7" y="382.4" width="2" height="2"/><rect x="228.7" y="382.4" width="2" height="2"/><rect x="252.7" y="382.4" width="2" height="2"/><rect x="264.7" y="382.4" width="2" height="2"/><rect x="276.7" y="382.4" width="2" height="2"/><rect x="288.7" y="382.4" width="2" height="2"/><rect x="312.7" y="382.4" width="2" height="2"/><rect x="324.7" y="382.4" width="2" height="2"/><rect x="336.7" y="382.4" width="2" height="2"/><rect x="348.7" y="382.4" width="2" height="2"/><rect x="372.7" y="382.4" width="2" height="2"/><rect x="384.7" y="382.4" width="2" height="2"/><rect x="396.7" y="382.4" width="2" height="2"/><rect x="408.7" y="382.4" width="2" height="2"/><rect x="432.7" y="382.4" width="2" height="2"/><rect x="444.7" y="382.4" width="2" height="2"/><rect x="456.7" y="382.4" width="2" height="2"/><rect x="468.7" y="382.4" width="2" height="2"/><rect x="492.7" y="382.4" width="2" height="2"/><rect x="504.7" y="382.4" width="2" height="2"/><rect x="516.7" y="382.4" width="2" height="2"/><rect x="528.7" y="382.4" width="2" height="2"/><rect x="552.7" y="382.4" width="2" height="2"/><rect x="564.7" y="382.4" width="2" height="2"/><rect x="576.7" y="382.4" width="2" height="2"/><rect x="588.7" y="382.4" width="2" height="2"/><rect x="612.7" y="382.4" width="2" height="2"/><rect x="624.7" y="382.4" width="2" height="2"/><rect x="636.7" y="382.4" width="2" height="2"/><rect x="648.7" y="382.4" width="2" height="2"/><rect x="672.7" y="382.4" width="2" height="2"/><rect x="684.7" y="382.4" width="2" height="2"/><rect x="696.7" y="382.4" width="2" height="2"/><rect x="708.7" y="382.4" width="2" height="2"/><rect x="732.7" y="382.4" width="2" height="2"/><rect x="744.7" y="382.4" width="2" height="2"/><rect x="756.7" y="382.4" width="2" height="2"/><rect x="768.7" y="382.4" width="2" height="2"/><rect x="792.7" y="382.4" width="2" height="2"/><rect x="804.7" y="382.4" width="2" height="2"/><rect x="816.7" y="382.4" width="2" height="2"/><rect x="828.7" y="382.4" width="2" height="2"/><rect x="852.7" y="382.4" width="2" height="2"/><rect x="864.7" y="382.4" width="2" height="2"/><rect x="876.7" y="382.4" width="2" height="2"/><rect x="888.7" y="382.4" width="2" height="2"/><rect x="912.7" y="382.4" width="2" height="2"/><rect x="924.7" y="382.4" width="2" height="2"/><rect x="36.7" y="442.4" width="2" height="2"/><rect x="48.7" y="442.4" width="2" height="2"/><rect x="72.7" y="442.4" width="2" height="2"/><rect x="84.7" y="442.4" width="2" height="2"/><rect x="96.7" y="442.4" width="2" height="2"/><rect x="108.7" y="442.4" width="2" height="2"/><rect x="132.7" y="442.4" width="2" height="2"/><rect x="144.7" y="442.4" width="2" height="2"/><rect x="156.7" y="442.4" width="2" height="2"/><rect x="168.7" y="442.4" width="2" height="2"/><rect x="192.7" y="442.4" width="2" height="2"/><rect x="204.7" y="442.4" width="2" height="2"/><rect x="216.7" y="442.4" width="2" height="2"/><rect x="228.7" y="442.4" width="2" height="2"/><rect x="252.7" y="442.4" width="2" height="2"/><rect x="264.7" y="442.4" width="2" height="2"/><rect x="276.7" y="442.4" width="2" height="2"/><rect x="288.7" y="442.4" width="2" height="2"/><rect x="312.7" y="442.4" width="2" height="2"/><rect x="324.7" y="442.4" width="2" height="2"/><rect x="336.7" y="442.4" width="2" height="2"/><rect x="348.7" y="442.4" width="2" height="2"/><rect x="372.7" y="442.4" width="2" height="2"/><rect x="384.7" y="442.4" width="2" height="2"/><rect x="396.7" y="442.4" width="2" height="2"/><rect x="408.7" y="442.4" width="2" height="2"/><rect x="432.7" y="442.4" width="2" height="2"/><rect x="444.7" y="442.4" width="2" height="2"/><rect x="456.7" y="442.4" width="2" height="2"/><rect x="468.7" y="442.4" width="2" height="2"/><rect x="492.7" y="442.4" width="2" height="2"/><rect x="504.7" y="442.4" width="2" height="2"/><rect x="516.7" y="442.4" width="2" height="2"/><rect x="528.7" y="442.4" width="2" height="2"/><rect x="552.7" y="442.4" width="2" height="2"/><rect x="564.7" y="442.4" width="2" height="2"/><rect x="576.7" y="442.4" width="2" height="2"/><rect x="588.7" y="442.4" width="2" height="2"/><rect x="612.7" y="442.4" width="2" height="2"/><rect x="624.7" y="442.4" width="2" height="2"/><rect x="636.7" y="442.4" width="2" height="2"/><rect x="648.7" y="442.4" width="2" height="2"/><rect x="672.7" y="442.4" width="2" height="2"/><rect x="684.7" y="442.4" width="2" height="2"/><rect x="696.7" y="442.4" width="2" height="2"/><rect x="708.7" y="442.4" width="2" height="2"/><rect x="732.7" y="442.4" width="2" height="2"/><rect x="744.7" y="442.4" width="2" height="2"/><rect x="756.7" y="442.4" width="2" height="2"/><rect x="768.7" y="442.4" width="2" height="2"/><rect x="792.7" y="442.4" width="2" height="2"/><rect x="804.7" y="442.4" width="2" height="2"/><rect x="816.7" y="442.4" width="2" height="2"/><rect x="828.7" y="442.4" width="2" height="2"/><rect x="852.7" y="442.4" width="2" height="2"/><rect x="864.7" y="442.4" width="2" height="2"/><rect x="876.7" y="442.4" width="2" height="2"/><rect x="888.7" y="442.4" width="2" height="2"/><rect x="912.7" y="442.4" width="2" height="2"/><rect x="924.7" y="442.4" width="2" height="2"/><rect x="36.7" y="502.4" width="2" height="2"/><rect x="48.7" y="502.4" width="2" height="2"/><rect x="72.7" y="502.4" width="2" height="2"/><rect x="84.7" y="502.4" width="2" height="2"/><rect x="96.7" y="502.4" width="2" height="2"/><rect x="108.7" y="502.4" width="2" height="2"/><rect x="132.7" y="502.4" width="2" height="2"/><rect x="144.7" y="502.4" width="2" height="2"/><rect x="156.7" y="502.4" width="2" height="2"/><rect x="168.7" y="502.4" width="2" height="2"/><rect x="192.7" y="502.4" width="2" height="2"/><rect x="204.7" y="502.4" width="2" height="2"/><rect x="216.7" y="502.4" width="2" height="2"/><rect x="228.7" y="502.4" width="2" height="2"/><rect x="252.7" y="502.4" width="2" height="2"/><rect x="264.7" y="502.4" width="2" height="2"/><rect x="276.7" y="502.4" width="2" height="2"/><rect x="288.7" y="502.4" width="2" height="2"/><rect x="312.7" y="502.4" width="2" height="2"/><rect x="324.7" y="502.4" width="2" height="2"/><rect x="336.7" y="502.4" width="2" height="2"/><rect x="348.7" y="502.4" width="2" height="2"/><rect x="372.7" y="502.4" width="2" height="2"/><rect x="384.7" y="502.4" width="2" height="2"/><rect x="396.7" y="502.4" width="2" height="2"/><rect x="408.7" y="502.4" width="2" height="2"/><rect x="432.7" y="502.4" width="2" height="2"/><rect x="444.7" y="502.4" width="2" height="2"/><rect x="456.7" y="502.4" width="2" height="2"/><rect x="468.7" y="502.4" width="2" height="2"/><rect x="492.7" y="502.4" width="2" height="2"/><rect x="504.7" y="502.4" width="2" height="2"/><rect x="516.7" y="502.4" width="2" height="2"/><rect x="528.7" y="502.4" width="2" height="2"/><rect x="552.7" y="502.4" width="2" height="2"/><rect x="564.7" y="502.4" width="2" height="2"/><rect x="576.7" y="502.4" width="2" height="2"/><rect x="588.7" y="502.4" width="2" height="2"/><rect x="612.7" y="502.4" width="2" height="2"/><rect x="624.7" y="502.4" width="2" height="2"/><rect x="636.7" y="502.4" width="2" height="2"/><rect x="648.7" y="502.4" width="2" height="2"/><rect x="672.7" y="502.4" width="2" height="2"/><rect x="684.7" y="502.4" width="2" height="2"/><rect x="696.7" y="502.4" width="2" height="2"/><rect x="708.7" y="502.4" width="2" height="2"/><rect x="732.7" y="502.4" width="2" height="2"/><rect x="744.7" y="502.4" width="2" height="2"/><rect x="756.7" y="502.4" width="2" height="2"/><rect x="768.7" y="502.4" width="2" height="2"/><rect x="792.7" y="502.4" width="2" height="2"/><rect x="804.7" y="502.4" width="2" height="2"/><rect x="816.7" y="502.4" width="2" height="2"/><rect x="828.7" y="502.4" width="2" height="2"/><rect x="852.7" y="502.4" width="2" height="2"/><rect x="864.7" y="502.4" width="2" height="2"/><rect x="876.7" y="502.4" width="2" height="2"/><rect x="888.7" y="502.4" width="2" height="2"/><rect x="912.7" y="502.4" width="2" height="2"/><rect x="924.7" y="502.4" width="2" height="2"/><rect x="36.7" y="562.4" width="2" height="2"/><rect x="48.7" y="562.4" width="2" height="2"/><rect x="72.7" y="562.4" width="2" height="2"/><rect x="84.7" y="562.4" width="2" height="2"/><rect x="96.7" y="562.4" width="2" height="2"/><rect x="108.7" y="562.4" width="2" height="2"/><rect x="132.7" y="562.4" width="2" height="2"/><rect x="144.7" y="562.4" width="2" height="2"/><rect x="156.7" y="562.4" width="2" height="2"/><rect x="168.7" y="562.4" width="2" height="2"/><rect x="192.7" y="562.4" width="2" height="2"/><rect x="204.7" y="562.4" width="2" height="2"/><rect x="216.7" y="562.4" width="2" height="2"/><rect x="228.7" y="562.4" width="2" height="2"/><rect x="252.7" y="562.4" width="2" height="2"/><rect x="264.7" y="562.4" width="2" height="2"/><rect x="276.7" y="562.4" width="2" height="2"/><rect x="288.7" y="562.4" width="2" height="2"/><rect x="312.7" y="562.4" width="2" height="2"/><rect x="324.7" y="562.4" width="2" height="2"/><rect x="336.7" y="562.4" width="2" height="2"/><rect x="348.7" y="562.4" width="2" height="2"/><rect x="372.7" y="562.4" width="2" height="2"/><rect x="384.7" y="562.4" width="2" height="2"/><rect x="396.7" y="562.4" width="2" height="2"/><rect x="408.7" y="562.4" width="2" height="2"/><rect x="432.7" y="562.4" width="2" height="2"/><rect x="444.7" y="562.4" width="2" height="2"/><rect x="456.7" y="562.4" width="2" height="2"/><rect x="468.7" y="562.4" width="2" height="2"/><rect x="492.7" y="562.4" width="2" height="2"/><rect x="504.7" y="562.4" width="2" height="2"/><rect x="516.7" y="562.4" width="2" height="2"/><rect x="528.7" y="562.4" width="2" height="2"/><rect x="552.7" y="562.4" width="2" height="2"/><rect x="564.7" y="562.4" width="2" height="2"/><rect x="576.7" y="562.4" width="2" height="2"/><rect x="588.7" y="562.4" width="2" height="2"/><rect x="612.7" y="562.4" width="2" height="2"/><rect x="624.7" y="562.4" width="2" height="2"/><rect x="636.7" y="562.4" width="2" height="2"/><rect x="648.7" y="562.4" width="2" height="2"/><rect x="672.7" y="562.4" width="2" height="2"/><rect x="684.7" y="562.4" width="2" height="2"/><rect x="696.7" y="562.4" width="2" height="2"/><rect x="708.7" y="562.4" width="2" height="2"/><rect x="732.7" y="562.4" width="2" height="2"/><rect x="744.7" y="562.4" width="2" height="2"/><rect x="756.7" y="562.4" width="2" height="2"/><rect x="768.7" y="562.4" width="2" height="2"/><rect x="792.7" y="562.4" width="2" height="2"/><rect x="804.7" y="562.4" width="2" height="2"/><rect x="816.7" y="562.4" width="2" height="2"/><rect x="828.7" y="562.4" width="2" height="2"/><rect x="852.7" y="562.4" width="2" height="2"/><rect x="864.7" y="562.4" width="2" height="2"/><rect x="876.7" y="562.4" width="2" height="2"/><rect x="888.7" y="562.4" width="2" height="2"/><rect x="912.7" y="562.4" width="2" height="2"/><rect x="924.7" y="562.4" width="2" height="2"/></g><g fill="#d4d4d4"><rect x="36.7" y="321.4" width="2" height="4"/><rect x="48.7" y="321.4" width="2" height="4"/><rect x="60.7" y="321.4" width="2" height="4"/><rect x="72.7" y="321.4" width="2" height="4"/><rect x="84.7" y="321.4" width="2" height="4"/><rect x="96.7" y="321.4" width="2" height="4"/><rect x="108.7" y="321.4" width="2" height="4"/><rect x="120.7" y="321.4" width="2" height="4"/><rect x="132.7" y="321.4" width="2" height="4"/><rect x="144.7" y="321.4" width="2" height="4"/><rect x="156.7" y="321.4" width="2" height="4"/><rect x="168.7" y="321.4" width="2" height="4"/><rect x="180.7" y="321.4" width="2" height="4"/><rect x="192.7" y="321.4" width="2" height="4"/><rect x="204.7" y="321.4" width="2" height="4"/><rect x="216.7" y="321.4" width="2" height="4"/><rect x="228.7" y="321.4" width="2" height="4"/><rect x="240.7" y="321.4" width="2" height="4"/><rect x="252.7" y="321.4" width="2" height="4"/><rect x="264.7" y="321.4" width="2" height="4"/><rect x="276.7" y="321.4" width="2" height="4"/><rect x="288.7" y="321.4" width="2" height="4"/><rect x="300.7" y="321.4" width="2" height="4"/><rect x="312.7" y="321.4" width="2" height="4"/><rect x="324.7" y="321.4" width="2" height="4"/><rect x="336.7" y="321.4" width="2" height="4"/><rect x="348.7" y="321.4" width="2" height="4"/><rect x="360.7" y="321.4" width="2" height="4"/><rect x="372.7" y="321.4" width="2" height="4"/><rect x="384.7" y="321.4" width="2" height="4"/><rect x="396.7" y="321.4" width="2" height="4"/><rect x="408.7" y="321.4" width="2" height="4"/><rect x="420.7" y="321.4" width="2" height="4"/><rect x="432.7" y="321.4" width="2" height="4"/><rect x="444.7" y="321.4" width="2" height="4"/><rect x="456.7" y="321.4" width="2" height="4"/><rect x="468.7" y="321.4" width="2" height="4"/><rect x="480.7" y="321.4" width="2" height="4"/><rect x="492.7" y="321.4" width="2" height="4"/><rect x="504.7" y="321.4" width="2" height="4"/><rect x="516.7" y="321.4" width="2" height="4"/><rect x="528.7" y="321.4" width="2" height="4"/><rect x="540.7" y="321.4" width="2" height="4"/><rect x="552.7" y="321.4" width="2" height="4"/><rect x="564.7" y="321.4" width="2" height="4"/><rect x="576.7" y="321.4" width="2" height="4"/><rect x="588.7" y="321.4" width="2" height="4"/><rect x="600.7" y="321.4" width="2" height="4"/><rect x="612.7" y="321.4" width="2" height="4"/><rect x="624.7" y="321.4" width="2" height="4"/><rect x="636.7" y="321.4" width="2" height="4"/><rect x="648.7" y="321.4" width="2" height="4"/><rect x="660.7" y="321.4" width="2" height="4"/><rect x="672.7" y="321.4" width="2" height="4"/><rect x="684.7" y="321.4" width="2" height="4"/><rect x="696.7" y="321.4" width="2" height="4"/><rect x="708.7" y="321.4" width="2" height="4"/><rect x="720.7" y="321.4" width="2" height="4"/><rect x="732.7" y="321.4" width="2" height="4"/><rect x="744.7" y="321.4" width="2" height="4"/><rect x="756.7" y="321.4" width="2" height="4"/><rect x="768.7" y="321.4" width="2" height="4"/><rect x="780.7" y="321.4" width="2" height="4"/><rect x="792.7" y="321.4" width="2" height="4"/><rect x="804.7" y="321.4" width="2" height="4"/><rect x="816.7" y="321.4" width="2" height="4"/><rect x="828.7" y="321.4" width="2" height="4"/><rect x="840.7" y="321.4" width="2" height="4"/><rect x="852.7" y="321.4" width="2" height="4"/><rect x="864.7" y="321.4" width="2" height="4"/><rect x="876.7" y="321.4" width="2" height="4"/><rect x="888.7" y="321.4" width="2" height="4"/><rect x="900.7" y="321.4" width="2" height="4"/><rect x="912.7" y="321.4" width="2" height="4"/><rect x="924.7" y="321.4" width="2" height="4"/><rect x="479.7" y="34.4" width="4" height="2"/><rect x="479.7" y="46.4" width="4" height="2"/><rect x="479.7" y="58.4" width="4" height="2"/><rect x="479.7" y="70.4" width="4" height="2"/><rect x="479.7" y="82.4" width="4" height="2"/><rect x="479.7" y="94.4" width="4" height="2"/><rect x="479.7" y="106.4" width="4" height="2"/><rect x="479.7" y="118.4" width="4" height="2"/><rect x="479.7" y="130.4" width="4" height="2"/><rect x="479.7" y="142.4" width="4" height="2"/><rect x="479.7" y="154.4" width="4" height="2"/><rect x="479.7" y="166.4" width="4" height="2"/><rect x="479.7" y="178.4" width="4" height="2"/><rect x="479.7" y="190.4" width="4" height="2"/><rect x="479.7" y="202.4" width="4" height="2"/><rect x="479.7" y="214.4" width="4" height="2"/><rect x="479.7" y="226.4" width="4" height="2"/><rect x="479.7" y="238.4" width="4" height="2"/><rect x="479.7" y="250.4" width="4" height="2"/><rect x="479.7" y="262.4" width="4" height="2"/><rect x="479.7" y="274.4" width="4" height="2"/><rect x="479.7" y="286.4" width="4" height="2"/><rect x="479.7" y="298.4" width="4" height="2"/><rect x="479.7" y="310.4" width="4" height="2"/><rect x="479.7" y="322.4" width="4" height="2"/><rect x="479.7" y="334.4" width="4" height="2"/><rect x="479.7" y="346.4" width="4" height="2"/><rect x="479.7" y="358.4" width="4" height="2"/><rect x="479.7" y="370.4" width="4" height="2"/><rect x="479.7" y="382.4" width="4" height="2"/><rect x="479.7" y="394.4" width="4" height="2"/><rect x="479.7" y="406.4" width="4" height="2"/><rect x="479.7" y="418.4" width="4" height="2"/><rect x="479.7" y="430.4" width="4" height="2"/><rect x="479.7" y="442.4" width="4" height="2"/><rect x="479.7" y="454.4" width="4" height="2"/><rect x="479.7" y="466.4" width="4" height="2"/><rect x="479.7" y="478.4" width="4" height="2"/><rect x="479.7" y="490.4" width="4" height="2"/><rect x="479.7" y="502.4" width="4" height="2"/><rect x="479.7" y="514.4" width="4" height="2"/><rect x="479.7" y="526.4" width="4" height="2"/><rect x="479.7" y="538.4" width="4" height="2"/><rect x="479.7" y="550.4" width="4" height="2"/><rect x="479.7" y="562.4" width="4" height="2"/><rect x="479.7" y="574.4" width="4" height="2"/><rect x="479.7" y="586.4" width="4" height="2"/><rect x="479.7" y="598.4" width="4" height="2"/><rect x="479.7" y="610.4" width="4" height="2"/></g><g fill="#ededed"><rect x="36.9" y="25" width="1.6" height="3.5"/><rect x="36.9" y="617.5" width="1.6" height="3.5"/><rect x="48.9" y="25" width="1.6" height="3.5"/><rect x="48.9" y="617.5" width="1.6" height="3.5"/><rect x="60.9" y="25" width="1.6" height="6"/><rect x="60.9" y="615" width="1.6" height="6"/><rect x="72.9" y="25" width="1.6" height="3.5"/><rect x="72.9" y="617.5" width="1.6" height="3.5"/><rect x="84.9" y="25" width="1.6" height="3.5"/><rect x="84.9" y="617.5" width="1.6" height="3.5"/><rect x="96.9" y="25" width="1.6" height="3.5"/><rect x="96.9" y="617.5" width="1.6" height="3.5"/><rect x="108.9" y="25" width="1.6" height="3.5"/><rect x="108.9" y="617.5" width="1.6" height="3.5"/><rect x="120.9" y="25" width="1.6" height="6"/><rect x="120.9" y="615" width="1.6" height="6"/><rect x="132.9" y="25" width="1.6" height="3.5"/><rect x="132.9" y="617.5" width="1.6" height="3.5"/><rect x="144.9" y="25" width="1.6" height="3.5"/><rect x="144.9" y="617.5" width="1.6" height="3.5"/><rect x="156.9" y="25" width="1.6" height="3.5"/><rect x="156.9" y="617.5" width="1.6" height="3.5"/><rect x="168.9" y="25" width="1.6" height="3.5"/><rect x="168.9" y="617.5" width="1.6" height="3.5"/><rect x="180.9" y="25" width="1.6" height="6"/><rect x="180.9" y="615" width="1.6" height="6"/><rect x="192.9" y="25" width="1.6" height="3.5"/><rect x="192.9" y="617.5" width="1.6" height="3.5"/><rect x="204.9" y="25" width="1.6" height="3.5"/><rect x="204.9" y="617.5" width="1.6" height="3.5"/><rect x="216.9" y="25" width="1.6" height="3.5"/><rect x="216.9" y="617.5" width="1.6" height="3.5"/><rect x="228.9" y="25" width="1.6" height="3.5"/><rect x="228.9" y="617.5" width="1.6" height="3.5"/><rect x="240.9" y="25" width="1.6" height="6"/><rect x="240.9" y="615" width="1.6" height="6"/><rect x="252.9" y="25" width="1.6" height="3.5"/><rect x="252.9" y="617.5" width="1.6" height="3.5"/><rect x="264.9" y="25" width="1.6" height="3.5"/><rect x="264.9" y="617.5" width="1.6" height="3.5"/><rect x="276.9" y="25" width="1.6" height="3.5"/><rect x="276.9" y="617.5" width="1.6" height="3.5"/><rect x="288.9" y="25" width="1.6" height="3.5"/><rect x="288.9" y="617.5" width="1.6" height="3.5"/><rect x="300.9" y="25" width="1.6" height="6"/><rect x="300.9" y="615" width="1.6" height="6"/><rect x="312.9" y="25" width="1.6" height="3.5"/><rect x="312.9" y="617.5" width="1.6" height="3.5"/><rect x="324.9" y="25" width="1.6" height="3.5"/><rect x="324.9" y="617.5" width="1.6" height="3.5"/><rect x="336.9" y="25" width="1.6" height="3.5"/><rect x="336.9" y="617.5" width="1.6" height="3.5"/><rect x="348.9" y="25" width="1.6" height="3.5"/><rect x="348.9" y="617.5" width="1.6" height="3.5"/><rect x="360.9" y="25" width="1.6" height="6"/><rect x="360.9" y="615" width="1.6" height="6"/><rect x="372.9" y="25" width="1.6" height="3.5"/><rect x="372.9" y="617.5" width="1.6" height="3.5"/><rect x="384.9" y="25" width="1.6" height="3.5"/><rect x="384.9" y="617.5" width="1.6" height="3.5"/><rect x="396.9" y="25" width="1.6" height="3.5"/><rect x="396.9" y="617.5" width="1.6" height="3.5"/><rect x="408.9" y="25" width="1.6" height="3.5"/><rect x="408.9" y="617.5" width="1.6" height="3.5"/><rect x="420.9" y="25" width="1.6" height="6"/><rect x="420.9" y="615" width="1.6" height="6"/><rect x="432.9" y="25" width="1.6" height="3.5"/><rect x="432.9" y="617.5" width="1.6" height="3.5"/><rect x="444.9" y="25" width="1.6" height="3.5"/><rect x="444.9" y="617.5" width="1.6" height="3.5"/><rect x="456.9" y="25" width="1.6" height="3.5"/><rect x="456.9" y="617.5" width="1.6" height="3.5"/><rect x="468.9" y="25" width="1.6" height="3.5"/><rect x="468.9" y="617.5" width="1.6" height="3.5"/><rect x="480.9" y="25" width="1.6" height="6"/><rect x="480.9" y="615" width="1.6" height="6"/><rect x="492.9" y="25" width="1.6" height="3.5"/><rect x="492.9" y="617.5" width="1.6" height="3.5"/><rect x="504.9" y="25" width="1.6" height="3.5"/><rect x="504.9" y="617.5" width="1.6" height="3.5"/><rect x="516.9" y="25" width="1.6" height="3.5"/><rect x="516.9" y="617.5" width="1.6" height="3.5"/><rect x="528.9" y="25" width="1.6" height="3.5"/><rect x="528.9" y="617.5" width="1.6" height="3.5"/><rect x="540.9" y="25" width="1.6" height="6"/><rect x="540.9" y="615" width="1.6" height="6"/><rect x="552.9" y="25" width="1.6" height="3.5"/><rect x="552.9" y="617.5" width="1.6" height="3.5"/><rect x="564.9" y="25" width="1.6" height="3.5"/><rect x="564.9" y="617.5" width="1.6" height="3.5"/><rect x="576.9" y="25" width="1.6" height="3.5"/><rect x="576.9" y="617.5" width="1.6" height="3.5"/><rect x="588.9" y="25" width="1.6" height="3.5"/><rect x="588.9" y="617.5" width="1.6" height="3.5"/><rect x="600.9" y="25" width="1.6" height="6"/><rect x="600.9" y="615" width="1.6" height="6"/><rect x="612.9" y="25" width="1.6" height="3.5"/><rect x="612.9" y="617.5" width="1.6" height="3.5"/><rect x="624.9" y="25" width="1.6" height="3.5"/><rect x="624.9" y="617.5" width="1.6" height="3.5"/><rect x="636.9" y="25" width="1.6" height="3.5"/><rect x="636.9" y="617.5" width="1.6" height="3.5"/><rect x="648.9" y="25" width="1.6" height="3.5"/><rect x="648.9" y="617.5" width="1.6" height="3.5"/><rect x="660.9" y="25" width="1.6" height="6"/><rect x="660.9" y="615" width="1.6" height="6"/><rect x="672.9" y="25" width="1.6" height="3.5"/><rect x="672.9" y="617.5" width="1.6" height="3.5"/><rect x="684.9" y="25" width="1.6" height="3.5"/><rect x="684.9" y="617.5" width="1.6" height="3.5"/><rect x="696.9" y="25" width="1.6" height="3.5"/><rect x="696.9" y="617.5" width="1.6" height="3.5"/><rect x="708.9" y="25" width="1.6" height="3.5"/><rect x="708.9" y="617.5" width="1.6" height="3.5"/><rect x="720.9" y="25" width="1.6" height="6"/><rect x="720.9" y="615" width="1.6" height="6"/><rect x="732.9" y="25" width="1.6" height="3.5"/><rect x="732.9" y="617.5" width="1.6" height="3.5"/><rect x="744.9" y="25" width="1.6" height="3.5"/><rect x="744.9" y="617.5" width="1.6" height="3.5"/><rect x="756.9" y="25" width="1.6" height="3.5"/><rect x="756.9" y="617.5" width="1.6" height="3.5"/><rect x="768.9" y="25" width="1.6" height="3.5"/><rect x="768.9" y="617.5" width="1.6" height="3.5"/><rect x="780.9" y="25" width="1.6" height="6"/><rect x="780.9" y="615" width="1.6" height="6"/><rect x="792.9" y="25" width="1.6" height="3.5"/><rect x="792.9" y="617.5" width="1.6" height="3.5"/><rect x="804.9" y="25" width="1.6" height="3.5"/><rect x="804.9" y="617.5" width="1.6" height="3.5"/><rect x="816.9" y="25" width="1.6" height="3.5"/><rect x="816.9" y="617.5" width="1.6" height="3.5"/><rect x="828.9" y="25" width="1.6" height="3.5"/><rect x="828.9" y="617.5" width="1.6" height="3.5"/><rect x="840.9" y="25" width="1.6" height="6"/><rect x="840.9" y="615" width="1.6" height="6"/><rect x="852.9" y="25" width="1.6" height="3.5"/><rect x="852.9" y="617.5" width="1.6" height="3.5"/><rect x="864.9" y="25" width="1.6" height="3.5"/><rect x="864.9" y="617.5" width="1.6" height="3.5"/><rect x="876.9" y="25" width="1.6" height="3.5"/><rect x="876.9" y="617.5" width="1.6" height="3.5"/><rect x="888.9" y="25" width="1.6" height="3.5"/><rect x="888.9" y="617.5" width="1.6" height="3.5"/><rect x="900.9" y="25" width="1.6" height="6"/><rect x="900.9" y="615" width="1.6" height="6"/><rect x="912.9" y="25" width="1.6" height="3.5"/><rect x="912.9" y="617.5" width="1.6" height="3.5"/><rect x="924.9" y="25" width="1.6" height="3.5"/><rect x="924.9" y="617.5" width="1.6" height="3.5"/><rect x="26" y="34.6" width="4" height="1.6"/><rect x="930" y="34.6" width="4" height="1.6"/><rect x="26" y="46.6" width="4" height="1.6"/><rect x="930" y="46.6" width="4" height="1.6"/><rect x="26" y="58.6" width="4" height="1.6"/><rect x="930" y="58.6" width="4" height="1.6"/><rect x="26" y="70.6" width="4" height="1.6"/><rect x="930" y="70.6" width="4" height="1.6"/><rect x="26" y="82.6" width="8" height="1.6"/><rect x="926" y="82.6" width="8" height="1.6"/><rect x="26" y="94.6" width="4" height="1.6"/><rect x="930" y="94.6" width="4" height="1.6"/><rect x="26" y="106.6" width="4" height="1.6"/><rect x="930" y="106.6" width="4" height="1.6"/><rect x="26" y="118.6" width="4" height="1.6"/><rect x="930" y="118.6" width="4" height="1.6"/><rect x="26" y="130.6" width="4" height="1.6"/><rect x="930" y="130.6" width="4" height="1.6"/><rect x="26" y="142.6" width="8" height="1.6"/><rect x="926" y="142.6" width="8" height="1.6"/><rect x="26" y="154.6" width="4" height="1.6"/><rect x="930" y="154.6" width="4" height="1.6"/><rect x="26" y="166.6" width="4" height="1.6"/><rect x="930" y="166.6" width="4" height="1.6"/><rect x="26" y="178.6" width="4" height="1.6"/><rect x="930" y="178.6" width="4" height="1.6"/><rect x="26" y="190.6" width="4" height="1.6"/><rect x="930" y="190.6" width="4" height="1.6"/><rect x="26" y="202.6" width="8" height="1.6"/><rect x="926" y="202.6" width="8" height="1.6"/><rect x="26" y="214.6" width="4" height="1.6"/><rect x="930" y="214.6" width="4" height="1.6"/><rect x="26" y="226.6" width="4" height="1.6"/><rect x="930" y="226.6" width="4" height="1.6"/><rect x="26" y="238.6" width="4" height="1.6"/><rect x="930" y="238.6" width="4" height="1.6"/><rect x="26" y="250.6" width="4" height="1.6"/><rect x="930" y="250.6" width="4" height="1.6"/><rect x="26" y="262.6" width="8" height="1.6"/><rect x="926" y="262.6" width="8" height="1.6"/><rect x="26" y="274.6" width="4" height="1.6"/><rect x="930" y="274.6" width="4" height="1.6"/><rect x="26" y="286.6" width="4" height="1.6"/><rect x="930" y="286.6" width="4" height="1.6"/><rect x="26" y="298.6" width="4" height="1.6"/><rect x="930" y="298.6" width="4" height="1.6"/><rect x="26" y="310.6" width="4" height="1.6"/><rect x="930" y="310.6" width="4" height="1.6"/><rect x="26" y="322.6" width="8" height="1.6"/><rect x="926" y="322.6" width="8" height="1.6"/><rect x="26" y="334.6" width="4" height="1.6"/><rect x="930" y="334.6" width="4" height="1.6"/><rect x="26" y="346.6" width="4" height="1.6"/><rect x="930" y="346.6" width="4" height="1.6"/><rect x="26" y="358.6" width="4" height="1.6"/><rect x="930" y="358.6" width="4" height="1.6"/><rect x="26" y="370.6" width="4" height="1.6"/><rect x="930" y="370.6" width="4" height="1.6"/><rect x="26" y="382.6" width="8" height="1.6"/><rect x="926" y="382.6" width="8" height="1.6"/><rect x="26" y="394.6" width="4" height="1.6"/><rect x="930" y="394.6" width="4" height="1.6"/><rect x="26" y="406.6" width="4" height="1.6"/><rect x="930" y="406.6" width="4" height="1.6"/><rect x="26" y="418.6" width="4" height="1.6"/><rect x="930" y="418.6" width="4" height="1.6"/><rect x="26" y="430.6" width="4" height="1.6"/><rect x="930" y="430.6" width="4" height="1.6"/><rect x="26" y="442.6" width="8" height="1.6"/><rect x="926" y="442.6" width="8" height="1.6"/><rect x="26" y="454.6" width="4" height="1.6"/><rect x="930" y="454.6" width="4" height="1.6"/><rect x="26" y="466.6" width="4" height="1.6"/><rect x="930" y="466.6" width="4" height="1.6"/><rect x="26" y="478.6" width="4" height="1.6"/><rect x="930" y="478.6" width="4" height="1.6"/><rect x="26" y="490.6" width="4" height="1.6"/><rect x="930" y="490.6" width="4" height="1.6"/><rect x="26" y="502.6" width="8" height="1.6"/><rect x="926" y="502.6" width="8" height="1.6"/><rect x="26" y="514.6" width="4" height="1.6"/><rect x="930" y="514.6" width="4" height="1.6"/><rect x="26" y="526.6" width="4" height="1.6"/><rect x="930" y="526.6" width="4" height="1.6"/><rect x="26" y="538.6" width="4" height="1.6"/><rect x="930" y="538.6" width="4" height="1.6"/><rect x="26" y="550.6" width="4" height="1.6"/><rect x="930" y="550.6" width="4" height="1.6"/><rect x="26" y="562.6" width="8" height="1.6"/><rect x="926" y="562.6" width="8" height="1.6"/><rect x="26" y="574.6" width="4" height="1.6"/><rect x="930" y="574.6" width="4" height="1.6"/><rect x="26" y="586.6" width="4" height="1.6"/><rect x="930" y="586.6" width="4" height="1.6"/><rect x="26" y="598.6" width="4" height="1.6"/><rect x="930" y="598.6" width="4" height="1.6"/><rect x="26" y="610.6" width="4" height="1.6"/><rect x="930" y="610.6" width="4" height="1.6"/></g><rect x="26" y="303.5" width="908" height="2.2" fill="#f0f000"/><rect x="26.0" y="305.5" width="3.5" height="2.9" fill="#e8e800"/><rect x="31.5" y="305.5" width="4" height="2.9" fill="#e8e800"/><rect x="37.0" y="305.5" width="2" height="2.9" fill="#e8e800"/><rect x="42.0" y="305.5" width="2" height="2.9" fill="#e8e800"/><rect x="46.0" y="305.5" width="4.5" height="2.9" fill="#e8e800"/><rect x="52.0" y="305.5" width="4.5" height="2.9" fill="#e8e800"/><rect x="58.5" y="305.5" width="2" height="2.9" fill="#e8e800"/><rect x="62.0" y="305.5" width="4" height="2.9" fill="#e8e800"/><rect x="68.5" y="305.5" width="2" height="2.9" fill="#e8e800"/><rect x="72.5" y="305.5" width="2" height="2.9" fill="#e8e800"/><rect x="77.5" y="305.5" width="4" height="2.9" fill="#e8e800"/><rect x="83.0" y="305.5" width="6" height="2.9" fill="#e8e800"/><rect x="92.0" y="305.5" width="2" height="2.9" fill="#e8e800"/><rect x="96.0" y="305.5" width="5" height="2.9" fill="#e8e800"/><rect x="104.0" y="305.5" width="2" height="2.9" fill="#e8e800"/><rect x="109.0" y="305.5" width="4.5" height="2.9" fill="#e8e800"/><rect x="116.0" y="305.5" width="2" height="2.9" fill="#e8e800"/><rect x="120.0" y="305.5" width="2" height="2.9" fill="#e8e800"/><rect x="125.0" y="305.5" width="6" height="2.9" fill="#e8e800"/><rect x="133.0" y="305.5" width="3.5" height="2.9" fill="#e8e800"/><rect x="139.0" y="305.5" width="3" height="2.9" fill="#e8e800"/><rect x="145.0" y="305.5" width="2" height="2.9" fill="#e8e800"/><rect x="150.0" y="305.5" width="3.5" height="2.9" fill="#e8e800"/><rect x="156.5" y="305.5" width="6" height="2.9" fill="#e8e800"/><rect x="164.5" y="305.5" width="2" height="2.9" fill="#e8e800"/><rect x="169.5" y="305.5" width="4.5" height="2.9" fill="#e8e800"/><rect x="176.0" y="305.5" width="3.5" height="2.9" fill="#e8e800"/><rect x="181.0" y="305.5" width="4.5" height="2.9" fill="#e8e800"/><rect x="187.0" y="305.5" width="4.5" height="2.9" fill="#e8e800"/><rect x="193.0" y="305.5" width="4.5" height="2.9" fill="#e8e800"/><rect x="199.5" y="305.5" width="4" height="2.9" fill="#e8e800"/><rect x="206.5" y="305.5" width="4" height="2.9" fill="#e8e800"/><rect x="212.5" y="305.5" width="4" height="2.9" fill="#e8e800"/><rect x="219.5" y="305.5" width="4" height="2.9" fill="#e8e800"/><rect x="225.5" y="305.5" width="3.5" height="2.9" fill="#e8e800"/><rect x="231.0" y="305.5" width="6" height="2.9" fill="#e8e800"/><rect x="239.0" y="305.5" width="5" height="2.9" fill="#e8e800"/><rect x="246.0" y="305.5" width="2" height="2.9" fill="#e8e800"/><rect x="251.0" y="305.5" width="3.5" height="2.9" fill="#e8e800"/><rect x="257.5" y="305.5" width="4" height="2.9" fill="#e8e800"/><rect x="263.5" y="305.5" width="5" height="2.9" fill="#e8e800"/><rect x="271.0" y="305.5" width="3.5" height="2.9" fill="#e8e800"/><rect x="277.5" y="305.5" width="2" height="2.9" fill="#e8e800"/><rect x="281.0" y="305.5" width="4.5" height="2.9" fill="#e8e800"/><rect x="288.0" y="305.5" width="3" height="2.9" fill="#e8e800"/><rect x="293.0" y="305.5" width="3" height="2.9" fill="#e8e800"/><rect x="298.5" y="305.5" width="4" height="2.9" fill="#e8e800"/><rect x="304.0" y="305.5" width="5" height="2.9" fill="#e8e800"/><rect x="310.5" y="305.5" width="6" height="2.9" fill="#e8e800"/><rect x="319.5" y="305.5" width="4.5" height="2.9" fill="#e8e800"/><rect x="326.0" y="305.5" width="3.5" height="2.9" fill="#e8e800"/><rect x="331.5" y="305.5" width="4.5" height="2.9" fill="#e8e800"/><rect x="338.5" y="305.5" width="4.5" height="2.9" fill="#e8e800"/><rect x="345.5" y="305.5" width="2" height="2.9" fill="#e8e800"/><rect x="349.0" y="305.5" width="3.5" height="2.9" fill="#e8e800"/><rect x="355.0" y="305.5" width="5" height="2.9" fill="#e8e800"/><rect x="361.5" y="305.5" width="2" height="2.9" fill="#e8e800"/><rect x="365.5" y="305.5" width="5" height="2.9" fill="#e8e800"/><rect x="373.5" y="305.5" width="5" height="2.9" fill="#e8e800"/><rect x="381.0" y="305.5" width="3.5" height="2.9" fill="#e8e800"/><rect x="387.0" y="305.5" width="5" height="2.9" fill="#e8e800"/><rect x="394.0" y="305.5" width="2" height="2.9" fill="#e8e800"/><rect x="398.5" y="305.5" width="3.5" height="2.9" fill="#e8e800"/><rect x="404.0" y="305.5" width="4.5" height="2.9" fill="#e8e800"/><rect x="410.0" y="305.5" width="4" height="2.9" fill="#e8e800"/><rect x="415.5" y="305.5" width="3" height="2.9" fill="#e8e800"/><rect x="420.5" y="305.5" width="3" height="2.9" fill="#e8e800"/><rect x="425.5" y="305.5" width="4" height="2.9" fill="#e8e800"/><rect x="432.0" y="305.5" width="6" height="2.9" fill="#e8e800"/><rect x="440.5" y="305.5" width="2" height="2.9" fill="#e8e800"/><rect x="444.5" y="305.5" width="4" height="2.9" fill="#e8e800"/><rect x="451.0" y="305.5" width="4.5" height="2.9" fill="#e8e800"/><rect x="457.5" y="305.5" width="3" height="2.9" fill="#e8e800"/><rect x="463.0" y="305.5" width="6" height="2.9" fill="#e8e800"/><rect x="472.0" y="305.5" width="3.5" height="2.9" fill="#e8e800"/><rect x="478.0" y="305.5" width="3.5" height="2.9" fill="#e8e800"/><rect x="484.0" y="305.5" width="3" height="2.9" fill="#e8e800"/><rect x="489.0" y="305.5" width="2" height="2.9" fill="#e8e800"/><rect x="493.0" y="305.5" width="3" height="2.9" fill="#e8e800"/><rect x="498.0" y="305.5" width="5" height="2.9" fill="#e8e800"/><rect x="505.0" y="305.5" width="2" height="2.9" fill="#e8e800"/><rect x="509.5" y="305.5" width="6" height="2.9" fill="#e8e800"/><rect x="518.5" y="305.5" width="3" height="2.9" fill="#e8e800"/><rect x="523.5" y="305.5" width="3.5" height="2.9" fill="#e8e800"/><rect x="528.5" y="305.5" width="3" height="2.9" fill="#e8e800"/><rect x="534.0" y="305.5" width="4.5" height="2.9" fill="#e8e800"/><rect x="540.5" y="305.5" width="4.5" height="2.9" fill="#e8e800"/><rect x="548.0" y="305.5" width="3.5" height="2.9" fill="#e8e800"/><rect x="553.5" y="305.5" width="5" height="2.9" fill="#e8e800"/><rect x="561.5" y="305.5" width="4.5" height="2.9" fill="#e8e800"/><rect x="567.5" y="305.5" width="4" height="2.9" fill="#e8e800"/><rect x="574.5" y="305.5" width="4" height="2.9" fill="#e8e800"/><rect x="581.0" y="305.5" width="4" height="2.9" fill="#e8e800"/><rect x="587.5" y="305.5" width="2" height="2.9" fill="#e8e800"/><rect x="592.0" y="305.5" width="5" height="2.9" fill="#e8e800"/><rect x="599.5" y="305.5" width="2" height="2.9" fill="#e8e800"/><rect x="603.5" y="305.5" width="2" height="2.9" fill="#e8e800"/><rect x="607.5" y="305.5" width="4" height="2.9" fill="#e8e800"/><rect x="613.5" y="305.5" width="2" height="2.9" fill="#e8e800"/><rect x="617.5" y="305.5" width="4.5" height="2.9" fill="#e8e800"/><rect x="623.5" y="305.5" width="2" height="2.9" fill="#e8e800"/><rect x="627.0" y="305.5" width="4.5" height="2.9" fill="#e8e800"/><rect x="633.5" y="305.5" width="4.5" height="2.9" fill="#e8e800"/><rect x="639.5" y="305.5" width="3.5" height="2.9" fill="#e8e800"/><rect x="646.0" y="305.5" width="2" height="2.9" fill="#e8e800"/><rect x="649.5" y="305.5" width="6" height="2.9" fill="#e8e800"/><rect x="657.5" y="305.5" width="4.5" height="2.9" fill="#e8e800"/><rect x="664.5" y="305.5" width="3" height="2.9" fill="#e8e800"/><rect x="669.5" y="305.5" width="3.5" height="2.9" fill="#e8e800"/><rect x="676.0" y="305.5" width="3.5" height="2.9" fill="#e8e800"/><rect x="682.0" y="305.5" width="2" height="2.9" fill="#e8e800"/><rect x="685.5" y="305.5" width="6" height="2.9" fill="#e8e800"/><rect x="694.0" y="305.5" width="4" height="2.9" fill="#e8e800"/><rect x="700.5" y="305.5" width="4" height="2.9" fill="#e8e800"/><rect x="706.5" y="305.5" width="2" height="2.9" fill="#e8e800"/><rect x="710.5" y="305.5" width="2" height="2.9" fill="#e8e800"/><rect x="714.5" y="305.5" width="5" height="2.9" fill="#e8e800"/><rect x="721.5" y="305.5" width="4" height="2.9" fill="#e8e800"/><rect x="727.5" y="305.5" width="4.5" height="2.9" fill="#e8e800"/><rect x="733.5" y="305.5" width="3" height="2.9" fill="#e8e800"/><rect x="739.5" y="305.5" width="3.5" height="2.9" fill="#e8e800"/><rect x="745.0" y="305.5" width="5" height="2.9" fill="#e8e800"/><rect x="753.0" y="305.5" width="2" height="2.9" fill="#e8e800"/><rect x="758.0" y="305.5" width="3.5" height="2.9" fill="#e8e800"/><rect x="763.0" y="305.5" width="5" height="2.9" fill="#e8e800"/><rect x="770.0" y="305.5" width="4.5" height="2.9" fill="#e8e800"/><rect x="776.5" y="305.5" width="3" height="2.9" fill="#e8e800"/><rect x="781.5" y="305.5" width="6" height="2.9" fill="#e8e800"/><rect x="789.5" y="305.5" width="4.5" height="2.9" fill="#e8e800"/><rect x="797.0" y="305.5" width="6" height="2.9" fill="#e8e800"/><rect x="806.0" y="305.5" width="3.5" height="2.9" fill="#e8e800"/><rect x="811.5" y="305.5" width="4.5" height="2.9" fill="#e8e800"/><rect x="818.0" y="305.5" width="6" height="2.9" fill="#e8e800"/><rect x="826.0" y="305.5" width="6" height="2.9" fill="#e8e800"/><rect x="834.5" y="305.5" width="5" height="2.9" fill="#e8e800"/><rect x="841.5" y="305.5" width="3" height="2.9" fill="#e8e800"/><rect x="847.5" y="305.5" width="4" height="2.9" fill="#e8e800"/><rect x="853.5" y="305.5" width="5" height="2.9" fill="#e8e800"/><rect x="860.0" y="305.5" width="2" height="2.9" fill="#e8e800"/><rect x="864.0" y="305.5" width="4" height="2.9" fill="#e8e800"/><rect x="870.0" y="305.5" width="3" height="2.9" fill="#e8e800"/><rect x="876.0" y="305.5" width="3.5" height="2.9" fill="#e8e800"/><rect x="882.0" y="305.5" width="6" height="2.9" fill="#e8e800"/><rect x="890.0" y="305.5" width="3.5" height="2.9" fill="#e8e800"/><rect x="895.0" y="305.5" width="3" height="2.9" fill="#e8e800"/><rect x="899.5" y="305.5" width="3" height="2.9" fill="#e8e800"/><rect x="905.0" y="305.5" width="3" height="2.9" fill="#e8e800"/><rect x="910.0" y="305.5" width="3" height="2.9" fill="#e8e800"/><rect x="915.5" y="305.5" width="4.5" height="2.9" fill="#e8e800"/><rect x="923.0" y="305.5" width="6" height="2.9" fill="#e8e800"/><rect x="930.5" y="305.5" width="3.5" height="2.9" fill="#e8e800"/><rect x="28.4" y="301.2" width="1.2" height="2.5" fill="#d8d800"/><rect x="35.4" y="301.2" width="1.2" height="2.5" fill="#d8d800"/><rect x="39.9" y="301.2" width="1.5" height="2.5" fill="#d8d800"/><rect x="44.4" y="301.2" width="1.5" height="2.5" fill="#d8d800"/><rect x="48.9" y="301.2" width="2" height="2.5" fill="#d8d800"/><rect x="51.4" y="301.2" width="2" height="2.5" fill="#d8d800"/><rect x="55.9" y="301.2" width="2" height="2.5" fill="#d8d800"/><rect x="61.9" y="301.2" width="1.2" height="2.5" fill="#d8d800"/><rect x="67.9" y="301.2" width="1.5" height="2.5" fill="#d8d800"/><rect x="70.9" y="301.2" width="1.5" height="2.5" fill="#d8d800"/><rect x="73.4" y="301.2" width="1.5" height="2.5" fill="#d8d800"/><rect x="78.4" y="301.2" width="2" height="2.5" fill="#d8d800"/><rect x="85.4" y="301.2" width="1.5" height="2.5" fill="#d8d800"/><rect x="90.4" y="301.2" width="2" height="2.5" fill="#d8d800"/><rect x="96.4" y="301.2" width="2" height="2.5" fill="#d8d800"/><rect x="99.4" y="301.2" width="1.5" height="2.5" fill="#d8d800"/><rect x="101.9" y="301.2" width="1.2" height="2.5" fill="#d8d800"/><rect x="108.9" y="301.2" width="1.2" height="2.5" fill="#d8d800"/><rect x="113.9" y="301.2" width="1.5" height="2.5" fill="#d8d800"/><rect x="118.4" y="301.2" width="1.5" height="2.5" fill="#d8d800"/><rect x="125.4" y="301.2" width="1.5" height="2.5" fill="#d8d800"/><rect x="127.9" y="301.2" width="2" height="2.5" fill="#d8d800"/><rect x="130.9" y="301.2" width="2" height="2.5" fill="#d8d800"/><rect x="135.9" y="301.2" width="1.5" height="2.5" fill="#d8d800"/><rect x="142.9" y="301.2" width="2" height="2.5" fill="#d8d800"/><rect x="146.9" y="301.2" width="2" height="2.5" fill="#d8d800"/><rect x="153.9" y="301.2" width="1.5" height="2.5" fill="#d8d800"/><rect x="156.4" y="301.2" width="2" height="2.5" fill="#d8d800"/><rect x="160.9" y="301.2" width="2" height="2.5" fill="#d8d800"/><rect x="167.9" y="301.2" width="1.5" height="2.5" fill="#d8d800"/><rect x="172.9" y="301.2" width="1.5" height="2.5" fill="#d8d800"/><rect x="177.9" y="301.2" width="1.2" height="2.5" fill="#d8d800"/><rect x="184.9" y="301.2" width="2" height="2.5" fill="#d8d800"/><rect x="191.9" y="301.2" width="1.5" height="2.5" fill="#d8d800"/><rect x="196.9" y="301.2" width="1.2" height="2.5" fill="#d8d800"/><rect x="203.9" y="301.2" width="1.5" height="2.5" fill="#d8d800"/><rect x="206.9" y="301.2" width="1.5" height="2.5" fill="#d8d800"/><rect x="211.4" y="301.2" width="1.2" height="2.5" fill="#d8d800"/><rect x="216.4" y="301.2" width="1.2" height="2.5" fill="#d8d800"/><rect x="220.4" y="301.2" width="2" height="2.5" fill="#d8d800"/><rect x="227.4" y="301.2" width="1.2" height="2.5" fill="#d8d800"/><rect x="232.4" y="301.2" width="1.2" height="2.5" fill="#d8d800"/><rect x="235.4" y="301.2" width="1.5" height="2.5" fill="#d8d800"/><rect x="239.4" y="301.2" width="1.2" height="2.5" fill="#d8d800"/><rect x="246.4" y="301.2" width="1.2" height="2.5" fill="#d8d800"/><rect x="251.4" y="301.2" width="2" height="2.5" fill="#d8d800"/><rect x="256.4" y="301.2" width="1.2" height="2.5" fill="#d8d800"/><rect x="263.4" y="301.2" width="1.2" height="2.5" fill="#d8d800"/><rect x="267.9" y="301.2" width="2" height="2.5" fill="#d8d800"/><rect x="272.9" y="301.2" width="1.5" height="2.5" fill="#d8d800"/><rect x="278.9" y="301.2" width="2" height="2.5" fill="#d8d800"/><rect x="283.4" y="301.2" width="2" height="2.5" fill="#d8d800"/><rect x="288.4" y="301.2" width="1.5" height="2.5" fill="#d8d800"/><rect x="294.4" y="301.2" width="2" height="2.5" fill="#d8d800"/><rect x="299.4" y="301.2" width="1.5" height="2.5" fill="#d8d800"/><rect x="306.4" y="301.2" width="2" height="2.5" fill="#d8d800"/><rect x="309.4" y="301.2" width="2" height="2.5" fill="#d8d800"/><rect x="311.9" y="301.2" width="2" height="2.5" fill="#d8d800"/><rect x="316.4" y="301.2" width="2" height="2.5" fill="#d8d800"/><rect x="318.9" y="301.2" width="1.5" height="2.5" fill="#d8d800"/><rect x="323.4" y="301.2" width="1.2" height="2.5" fill="#d8d800"/><rect x="326.4" y="301.2" width="2" height="2.5" fill="#d8d800"/><rect x="333.4" y="301.2" width="1.2" height="2.5" fill="#d8d800"/><rect x="340.4" y="301.2" width="1.5" height="2.5" fill="#d8d800"/><rect x="346.4" y="301.2" width="2" height="2.5" fill="#d8d800"/><rect x="349.4" y="301.2" width="2" height="2.5" fill="#d8d800"/><rect x="352.4" y="301.2" width="2" height="2.5" fill="#d8d800"/><rect x="355.4" y="301.2" width="1.2" height="2.5" fill="#d8d800"/><rect x="359.9" y="301.2" width="2" height="2.5" fill="#d8d800"/><rect x="362.9" y="301.2" width="1.5" height="2.5" fill="#d8d800"/><rect x="365.9" y="301.2" width="2" height="2.5" fill="#d8d800"/><rect x="370.9" y="301.2" width="2" height="2.5" fill="#d8d800"/><rect x="374.9" y="301.2" width="2" height="2.5" fill="#d8d800"/><rect x="377.9" y="301.2" width="2" height="2.5" fill="#d8d800"/><rect x="381.9" y="301.2" width="1.2" height="2.5" fill="#d8d800"/><rect x="387.9" y="301.2" width="2" height="2.5" fill="#d8d800"/><rect x="390.4" y="301.2" width="2" height="2.5" fill="#d8d800"/><rect x="395.4" y="301.2" width="2" height="2.5" fill="#d8d800"/><rect x="399.9" y="301.2" width="1.2" height="2.5" fill="#d8d800"/><rect x="404.4" y="301.2" width="2" height="2.5" fill="#d8d800"/><rect x="409.4" y="301.2" width="2" height="2.5" fill="#d8d800"/><rect x="414.4" y="301.2" width="1.2" height="2.5" fill="#d8d800"/><rect x="416.9" y="301.2" width="1.5" height="2.5" fill="#d8d800"/><rect x="419.4" y="301.2" width="1.2" height="2.5" fill="#d8d800"/><rect x="423.4" y="301.2" width="2" height="2.5" fill="#d8d800"/><rect x="425.9" y="301.2" width="1.5" height="2.5" fill="#d8d800"/><rect x="429.9" y="301.2" width="1.5" height="2.5" fill="#d8d800"/><rect x="436.9" y="301.2" width="2" height="2.5" fill="#d8d800"/><rect x="443.9" y="301.2" width="2" height="2.5" fill="#d8d800"/><rect x="448.4" y="301.2" width="1.5" height="2.5" fill="#d8d800"/><rect x="453.4" y="301.2" width="2" height="2.5" fill="#d8d800"/><rect x="459.4" y="301.2" width="2" height="2.5" fill="#d8d800"/><rect x="461.9" y="301.2" width="2" height="2.5" fill="#d8d800"/><rect x="464.4" y="301.2" width="1.5" height="2.5" fill="#d8d800"/><rect x="468.9" y="301.2" width="1.2" height="2.5" fill="#d8d800"/><rect x="472.9" y="301.2" width="1.2" height="2.5" fill="#d8d800"/><rect x="478.9" y="301.2" width="1.2" height="2.5" fill="#d8d800"/><rect x="485.9" y="301.2" width="2" height="2.5" fill="#d8d800"/><rect x="488.4" y="301.2" width="1.5" height="2.5" fill="#d8d800"/><rect x="490.9" y="301.2" width="2" height="2.5" fill="#d8d800"/><rect x="497.9" y="301.2" width="1.2" height="2.5" fill="#d8d800"/><rect x="502.4" y="301.2" width="1.2" height="2.5" fill="#d8d800"/><rect x="506.4" y="301.2" width="2" height="2.5" fill="#d8d800"/><rect x="510.4" y="301.2" width="1.5" height="2.5" fill="#d8d800"/><rect x="512.9" y="301.2" width="1.5" height="2.5" fill="#d8d800"/><rect x="515.4" y="301.2" width="1.5" height="2.5" fill="#d8d800"/><rect x="519.4" y="301.2" width="1.2" height="2.5" fill="#d8d800"/><rect x="522.4" y="301.2" width="1.5" height="2.5" fill="#d8d800"/><rect x="526.4" y="301.2" width="2" height="2.5" fill="#d8d800"/><rect x="531.4" y="301.2" width="1.5" height="2.5" fill="#d8d800"/><rect x="535.4" y="301.2" width="2" height="2.5" fill="#d8d800"/><rect x="540.4" y="301.2" width="1.5" height="2.5" fill="#d8d800"/><rect x="544.4" y="301.2" width="2" height="2.5" fill="#d8d800"/><rect x="551.4" y="301.2" width="1.2" height="2.5" fill="#d8d800"/><rect x="555.4" y="301.2" width="1.2" height="2.5" fill="#d8d800"/><rect x="557.9" y="301.2" width="1.2" height="2.5" fill="#d8d800"/><rect x="563.9" y="301.2" width="1.5" height="2.5" fill="#d8d800"/><rect x="568.9" y="301.2" width="2" height="2.5" fill="#d8d800"/><rect x="571.9" y="301.2" width="2" height="2.5" fill="#d8d800"/><rect x="574.4" y="301.2" width="2" height="2.5" fill="#d8d800"/><rect x="580.4" y="301.2" width="2" height="2.5" fill="#d8d800"/><rect x="585.4" y="301.2" width="2" height="2.5" fill="#d8d800"/><rect x="590.4" y="301.2" width="2" height="2.5" fill="#d8d800"/><rect x="596.4" y="301.2" width="1.5" height="2.5" fill="#d8d800"/><rect x="599.4" y="301.2" width="2" height="2.5" fill="#d8d800"/><rect x="602.4" y="301.2" width="1.5" height="2.5" fill="#d8d800"/><rect x="606.9" y="301.2" width="2" height="2.5" fill="#d8d800"/><rect x="609.4" y="301.2" width="1.5" height="2.5" fill="#d8d800"/><rect x="611.9" y="301.2" width="1.2" height="2.5" fill="#d8d800"/><rect x="617.9" y="301.2" width="2" height="2.5" fill="#d8d800"/><rect x="622.4" y="301.2" width="1.5" height="2.5" fill="#d8d800"/><rect x="624.9" y="301.2" width="1.2" height="2.5" fill="#d8d800"/><rect x="630.9" y="301.2" width="2" height="2.5" fill="#d8d800"/><rect x="637.9" y="301.2" width="2" height="2.5" fill="#d8d800"/><rect x="642.9" y="301.2" width="1.5" height="2.5" fill="#d8d800"/><rect x="648.9" y="301.2" width="2" height="2.5" fill="#d8d800"/><rect x="651.4" y="301.2" width="2" height="2.5" fill="#d8d800"/><rect x="654.4" y="301.2" width="1.5" height="2.5" fill="#d8d800"/><rect x="658.4" y="301.2" width="2" height="2.5" fill="#d8d800"/><rect x="660.9" y="301.2" width="2" height="2.5" fill="#d8d800"/><rect x="664.9" y="301.2" width="2" height="2.5" fill="#d8d800"/><rect x="669.9" y="301.2" width="2" height="2.5" fill="#d8d800"/><rect x="672.9" y="301.2" width="1.2" height="2.5" fill="#d8d800"/><rect x="676.9" y="301.2" width="1.5" height="2.5" fill="#d8d800"/><rect x="680.9" y="301.2" width="1.5" height="2.5" fill="#d8d800"/><rect x="683.4" y="301.2" width="2" height="2.5" fill="#d8d800"/><rect x="687.9" y="301.2" width="1.2" height="2.5" fill="#d8d800"/><rect x="692.4" y="301.2" width="2" height="2.5" fill="#d8d800"/><rect x="697.4" y="301.2" width="1.5" height="2.5" fill="#d8d800"/><rect x="700.4" y="301.2" width="1.2" height="2.5" fill="#d8d800"/><rect x="702.9" y="301.2" width="2" height="2.5" fill="#d8d800"/><rect x="709.9" y="301.2" width="1.2" height="2.5" fill="#d8d800"/><rect x="712.9" y="301.2" width="2" height="2.5" fill="#d8d800"/><rect x="717.9" y="301.2" width="1.2" height="2.5" fill="#d8d800"/><rect x="722.4" y="301.2" width="1.2" height="2.5" fill="#d8d800"/><rect x="726.4" y="301.2" width="2" height="2.5" fill="#d8d800"/><rect x="732.4" y="301.2" width="1.5" height="2.5" fill="#d8d800"/><rect x="734.9" y="301.2" width="1.5" height="2.5" fill="#d8d800"/><rect x="740.9" y="301.2" width="2" height="2.5" fill="#d8d800"/><rect x="747.9" y="301.2" width="2" height="2.5" fill="#d8d800"/><rect x="753.9" y="301.2" width="2" height="2.5" fill="#d8d800"/><rect x="756.9" y="301.2" width="2" height="2.5" fill="#d8d800"/><rect x="762.9" y="301.2" width="1.5" height="2.5" fill="#d8d800"/><rect x="765.4" y="301.2" width="2" height="2.5" fill="#d8d800"/><rect x="771.4" y="301.2" width="1.5" height="2.5" fill="#d8d800"/><rect x="776.4" y="301.2" width="1.2" height="2.5" fill="#d8d800"/><rect x="783.4" y="301.2" width="1.5" height="2.5" fill="#d8d800"/><rect x="785.9" y="301.2" width="1.2" height="2.5" fill="#d8d800"/><rect x="788.4" y="301.2" width="1.5" height="2.5" fill="#d8d800"/><rect x="794.4" y="301.2" width="2" height="2.5" fill="#d8d800"/><rect x="796.9" y="301.2" width="2" height="2.5" fill="#d8d800"/><rect x="803.9" y="301.2" width="2" height="2.5" fill="#d8d800"/><rect x="808.9" y="301.2" width="1.2" height="2.5" fill="#d8d800"/><rect x="814.9" y="301.2" width="1.2" height="2.5" fill="#d8d800"/><rect x="820.9" y="301.2" width="1.5" height="2.5" fill="#d8d800"/><rect x="825.4" y="301.2" width="2" height="2.5" fill="#d8d800"/><rect x="827.9" y="301.2" width="2" height="2.5" fill="#d8d800"/><rect x="834.9" y="301.2" width="1.2" height="2.5" fill="#d8d800"/><rect x="840.9" y="301.2" width="1.2" height="2.5" fill="#d8d800"/><rect x="846.9" y="301.2" width="1.2" height="2.5" fill="#d8d800"/><rect x="852.9" y="301.2" width="2" height="2.5" fill="#d8d800"/><rect x="856.9" y="301.2" width="1.2" height="2.5" fill="#d8d800"/><rect x="863.9" y="301.2" width="2" height="2.5" fill="#d8d800"/><rect x="866.9" y="301.2" width="1.5" height="2.5" fill="#d8d800"/><rect x="869.9" y="301.2" width="2" height="2.5" fill="#d8d800"/><rect x="874.4" y="301.2" width="2" height="2.5" fill="#d8d800"/><rect x="876.9" y="301.2" width="2" height="2.5" fill="#d8d800"/><rect x="882.9" y="301.2" width="2" height="2.5" fill="#d8d800"/><rect x="889.9" y="301.2" width="1.2" height="2.5" fill="#d8d800"/><rect x="894.9" y="301.2" width="1.5" height="2.5" fill="#d8d800"/><rect x="897.4" y="301.2" width="1.5" height="2.5" fill="#d8d800"/><rect x="901.4" y="301.2" width="2" height="2.5" fill="#d8d800"/><rect x="907.4" y="301.2" width="2" height="2.5" fill="#d8d800"/><rect x="912.4" y="301.2" width="1.5" height="2.5" fill="#d8d800"/><rect x="914.9" y="301.2" width="2" height="2.5" fill="#d8d800"/><rect x="917.4" y="301.2" width="2" height="2.5" fill="#d8d800"/><rect x="921.4" y="301.2" width="1.2" height="2.5" fill="#d8d800"/><rect x="927.4" y="301.2" width="1.5" height="2.5" fill="#d8d800"/><rect x="933.4" y="301.2" width="2" height="2.5" fill="#d8d800"/><rect x="177.2" y="300.5" width="5.5" height="9" fill="#000"/><polyline fill="none" stroke="#d8d810" stroke-width="1.2" points="175.8,305 176.6,301 178.2,297 178.2,279.5 178.7,272.6 182,272.6 182,288 183.2,289 183.4,302 184.5,305"/><rect x="178.4" y="272.6" width="3.4" height="2.5" fill="#d8d810"/><rect x="476" y="300.5" width="4.5" height="9" fill="#000"/><polyline fill="none" stroke="#d8d810" stroke-width="1.2" points="474.3,305 475.2,301.7 475.2,286.7 476.7,286 476.7,270 479.6,270 479.6,283.3 480.5,284 480.5,300.8 481.6,305"/><rect x="476.7" y="270" width="2.9" height="2.5" fill="#d8d810"/><rect x="775.8" y="300.5" width="5" height="9" fill="#000"/><polyline fill="none" stroke="#d8d810" stroke-width="1.2" points="773.4,305 774.4,298 775.4,297 775.6,282.4 776.5,276 776.5,272.6 780,272.6 780,286.3 781,287 781,300 782,305"/><rect x="776.5" y="272.6" width="3.5" height="3" fill="#d8d810"/><rect x="175.2" y="322.59999999999997" width="13" height="1.6" fill="#d8d8d8"/><rect x="180.89999999999998" y="317.4" width="1.6" height="12" fill="#d8d8d8"/><rect x="775.2" y="322.59999999999997" width="13" height="1.6" fill="#d8d8d8"/><rect x="780.9000000000001" y="317.4" width="1.6" height="12" fill="#d8d8d8"/>
<!-- left marker 2 -->
<path d="M0.9 316 H16.5 L24 326.2 L16.5 336.5 H0.9z" fill="#000" stroke="#c8d838" stroke-width="1.7"/>
<text x="4" y="332.8" fill="#e0e020" stroke="#e0e020" stroke-width="0.6" style="font-family:'Liberation Sans';font-size:17.5px">2</text>
<!-- top-left purple marker -->
<path d="M24 25.2 H32.8 V36 L27.5 40 H24" fill="#10001a" stroke="#8a2cd0" stroke-width="1.5"/>
<path d="M25 28.4h7v1.7h-2.5v5.8h-1.8v-5.8h-2.7z" fill="#b040e8"/>
<!-- right purple trigger marker -->
<path d="M936.3 203.3 L952 196.7 V209.9z" fill="#c012e0"/>
<!-- bottom panel -->
<rect x="0" y="623" width="960" height="97" fill="#0383e2"/>
<rect x="0" y="623" width="383" height="97" fill="#78aab2"/>
<rect x="383" y="718.4" width="577" height="1.6" fill="#0a78d0"/>
<rect x="494" y="645.6" width="464.5" height="72.8" fill="#0262a2"/><rect x="494" y="716.4" width="464.5" height="1.2" fill="#025a9a"/>
<rect x="1.5" y="623" width="249" height="23.4" rx="5" fill="#000"/>
<rect x="1.5" y="646.2" width="249" height="1.2" fill="#2a5a72"/>
<rect x="1.5" y="647.4" width="249" height="23.1" rx="5" fill="#000"/>
<rect x="253.5" y="623" width="126.5" height="47.5" rx="6" fill="#000"/>
<rect x="1.5" y="673" width="378.5" height="43.7" rx="5" fill="#000"/>
<g style="font-family:'Liberation Sans';font-size:15.5px" fill="#000" stroke="#000" stroke-width="0.5">
<circle cx="12.5" cy="636.3" r="9.2" fill="#f00000"/>
<text x="8.2" y="641.8" letter-spacing="1.636" transform="matrix(0.88 0 0 0.91 1.704 57.762)">1</text>
<circle cx="12.5" cy="660" r="9.4" fill="#e6e020"/>
<text x="8.2" y="665.6" letter-spacing="1.636" transform="matrix(0.88 0 0 0.91 1.704 59.904)">2</text>
<circle cx="12.5" cy="684" r="9.5" fill="#e6e020"/>
<text x="8.2" y="689.6" letter-spacing="1.636" transform="matrix(0.88 0 0 0.91 1.704 62.064)">2</text>
<circle cx="12.5" cy="706.5" r="9.5" fill="#e6e020"/>
<text x="8.2" y="712.1" letter-spacing="1.636" transform="matrix(0.88 0 0 0.91 1.704 64.089)">2</text>
<circle cx="202" cy="684" r="9.6" fill="#e6e020"/>
<text x="197.7" y="689.6" letter-spacing="1.636" transform="matrix(0.88 0 0 0.91 24.444 62.064)">2</text>
<circle cx="202" cy="706.5" r="9.6" fill="#e6e020"/>
<text x="197.7" y="712.1" letter-spacing="1.636" transform="matrix(0.88 0 0 0.91 24.444 64.089)">2</text>
</g>
<text x="22" y="643" fill="#d01414" letter-spacing="1.636" transform="matrix(0.88 0 0 0.91 3.360 57.870)">5V-</text>
<text x="125" y="643" fill="#d01414" letter-spacing="1.636" transform="matrix(0.88 0 0 0.91 15.720 57.870)">0.00div</text>
<text x="22" y="666.6" fill="#d0d032" letter-spacing="1.636" transform="matrix(0.88 0 0 0.91 3.360 59.994)">2V-</text>
<text x="125" y="666.6" fill="#d0d032" letter-spacing="1.636" transform="matrix(0.88 0 0 0.91 15.720 59.994)">-0.04div</text>
<text x="261.5" y="642.5" fill="#d8d8d8" letter-spacing="1.636" transform="matrix(0.88 0 0 0.91 32.100 57.825)">(125KS/s)</text>
<text x="261.5" y="665" fill="#d8d8d8" letter-spacing="1.636" transform="matrix(0.88 0 0 0.91 32.100 59.850)">Depth:10K</text>
<text x="25.5" y="690.2" fill="#d0d032" letter-spacing="1.636" transform="matrix(0.88 0 0 0.91 3.780 62.118)">F:  ?</text>
<text x="25.5" y="713.1" fill="#d0d032" letter-spacing="1.636" transform="matrix(0.88 0 0 0.91 3.780 64.179)">+D:  ?</text>
<text x="217" y="690.2" fill="#d0d032" letter-spacing="1.636" transform="matrix(0.88 0 0 0.91 26.760 62.118)">Vk:739.1mv</text>
<text x="217" y="713.1" fill="#d0d032" letter-spacing="1.636" transform="matrix(0.88 0 0 0.91 26.760 64.179)">V:729.4mv</text>
<!-- M pill -->
<rect x="383" y="623" width="118.7" height="22" rx="10.5" fill="#000"/>
<text x="398.5" y="640.8" fill="#d8d8d8" letter-spacing="1.636" transform="matrix(0.88 0 0 0.91 48.540 57.672)">M:4.0ms</text>
<!-- trigger pill -->
<rect x="798" y="624.3" width="154" height="20.5" rx="10.25" fill="#000"/>
<circle cx="810.4" cy="634.8" r="9" fill="#f00000"/>
<text x="806.2" y="640.5" fill="#000" style="font-family:'Liberation Sans';font-weight:bold;font-size:15px">1</text>
<path d="M822 642.4 H831.7 L837 627.4 H846" fill="none" stroke="#e0e0e0" stroke-width="1.6" stroke-linejoin="round"/>
<text x="849" y="642" fill="#d8d8d8" letter-spacing="1.636" transform="matrix(0.88 0 0 0.91 102.600 57.780)">10.0V</text>
<!-- Type button -->
<rect x="383" y="645.5" width="111" height="73" fill="#0576d4"/>
<rect x="387" y="649" width="104" height="64" fill="#0383e2"/>
<rect x="387" y="649" width="104" height="2.4" fill="#56aaf2"/>
<rect x="387" y="649" width="2" height="64" fill="#3a98ea"/>
<rect x="491" y="648" width="3.5" height="69" fill="#0848a0"/>
<rect x="386" y="713.3" width="108" height="2.8" rx="1.2" fill="#08449a"/>
<text x="415" y="674.5" fill="#06184a" stroke="#06184a" stroke-width="0.55" letter-spacing="1.636" transform="matrix(0.88 0 0 0.91 50.520 60.705)">Type</text>
<rect x="409.5" y="685.5" width="59.5" height="23" fill="#e6e6e6"/>
<text x="410" y="703.5" fill="#000" letter-spacing="1.636" transform="matrix(0.88 0 0 0.91 49.920 63.315)">Image</text>
<!-- Save button -->
<rect x="715" y="647" width="110" height="70" rx="3" fill="#0852a0"/>
<rect x="716.5" y="648.5" width="106" height="66" rx="3" fill="#0383e2"/>
<rect x="718" y="648.8" width="103" height="2.4" fill="#56aaf2"/>
<rect x="716.8" y="650" width="1.8" height="63" fill="#3a98ea"/>
<text x="745.5" y="688.3" fill="#0a2262" stroke="#0a2262" stroke-width="0.45" style="font-family:'Liberation Sans';font-size:16.5px;letter-spacing:2.3px">Save</text>
</svg>
</body></html>
